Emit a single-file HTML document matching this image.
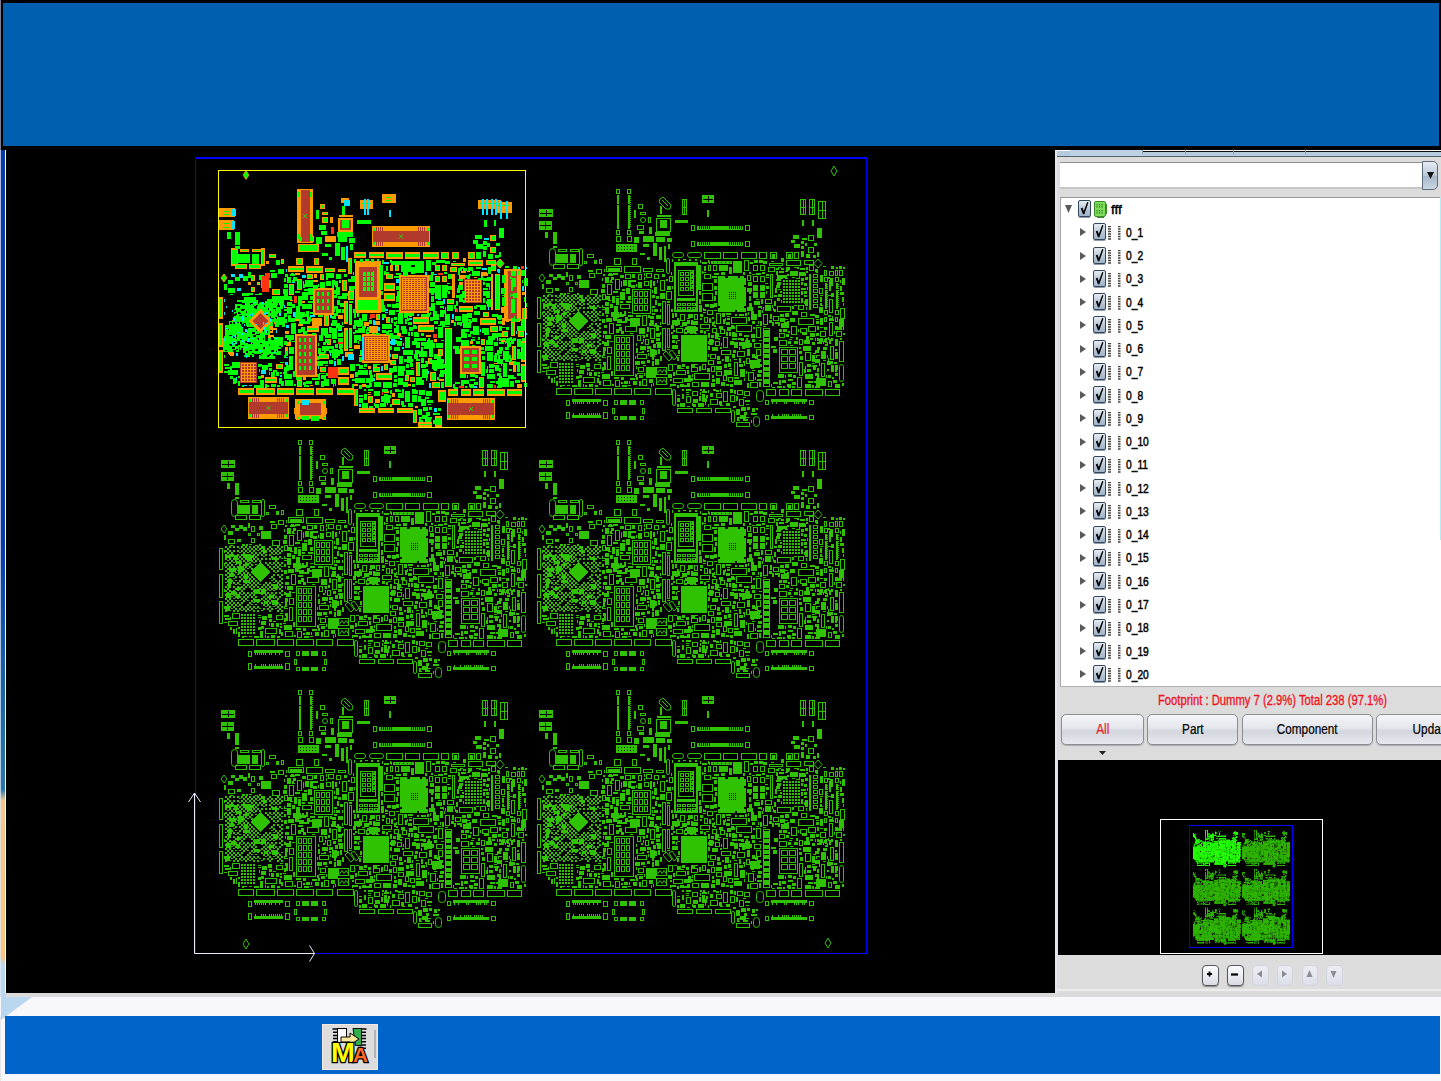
<!DOCTYPE html>
<html lang="en"><head><meta charset="utf-8"><title>PCB Footprint Viewer</title>
<style>
html,body{margin:0;padding:0}
body{width:1441px;height:1081px;overflow:hidden;position:relative;background:#f8f8fa;font-family:"Liberation Sans",sans-serif;font-size:13px;color:#000}
.a{position:absolute}
#banner{left:0;top:0;width:1441px;height:150px;background:#000}
#banner i{position:absolute;left:3px;top:3px;width:1436px;height:143px;background:#005fae}
#canvas{left:6px;top:146px;width:1050px;height:847px;background:#000}
#panel{left:1055px;top:150px;width:386px;height:843px;background:#dcdcdc}
.t{position:absolute;white-space:nowrap;transform-origin:0 50%;transform:scaleX(.76);font-size:13.5px;line-height:16px;height:16px;-webkit-text-stroke:.5px #000}
.cb{position:absolute;width:11px;height:15px;border:1px solid #33465e;border-radius:2px;background:linear-gradient(#e6edf4,#bccbda 50%,#9fb3c8);box-shadow:0 1px 0 #8e9cac}
.cb svg{position:absolute;left:0;top:0}
.btn{position:absolute;top:564px;height:31px;border:1px solid #8a8d93;border-radius:5px;background:linear-gradient(#f4f5f8,#e4e6ec 45%,#d3d6de 55%,#e6e8ee);box-shadow:0 1px 1px #aaa;box-sizing:border-box;text-align:center;overflow:hidden}
.btn span{display:inline-block;transform:scaleX(.84);line-height:29px;font-size:14px;-webkit-text-stroke:.2px currentColor}
.zb{position:absolute;top:814.500px;width:16.500px;height:21px;box-sizing:border-box;border-radius:4px;text-align:center}
</style></head><body>
<div id="banner" class="a"><i></i></div>
<div class="a" style="left:0;top:0;width:1px;height:150px;background:#7c8098"></div><div class="a" style="left:0;top:150px;width:6px;height:847px;background:linear-gradient(#0b36a6 0,#0b36a6 46%,#0d4aa8 52%,#1a6aa6 66%,#2a78a8 75.500%,#f3c88a 76.800%,#f6c67c 95.200%,#bcd8ee 96.200%,#b8d6ee 100%)"></div><div class="a" style="left:0;top:150px;width:1px;height:847px;background:rgba(225,232,250,.75)"></div><div class="a" style="left:5px;top:150px;width:1px;height:843px;background:#fff"></div>
<div id="canvas" class="a"><svg class="a" style="left:0;top:0" width="1050" height="847" shape-rendering="crispEdges"><defs><g id="bd"><path fill="currentColor" style="stroke:var(--bs,none);stroke-width:var(--bw,0)" d="M3 39h14v8h-14zM3 51h13v9h-13zM9 62h3v6h-3zM17 62h4v12h-4zM17 76h4v2h-4zM80 19h4v5h-4zM81 20v3h2v-3zM80 60h4v5h-4zM81 61v3h2v-3zM81 25h2v34h-2zM91 19h4v5h-4zM92 20v3h2v-3zM91 60h4v5h-4zM92 61v3h2v-3zM92 25h2v34h-2zM94 26h1v1h-1zM94 28h1v1h-1zM94 30h1v1h-1zM94 32h1v1h-1zM94 34h1v1h-1zM94 36h1v1h-1zM94 38h1v1h-1zM94 40h1v1h-1zM94 42h1v1h-1zM94 44h1v1h-1zM94 46h1v1h-1zM94 48h1v1h-1zM94 50h1v1h-1zM94 52h1v1h-1zM94 54h1v1h-1zM94 56h1v1h-1zM80 66h5v6h-5zM81 67v4h3v-4zM91 66h5v6h-5zM92 67v4h3v-4zM80 74h21v8h-21zM98 40h2v8h-2zM104 42h6v3h-6zM105 43v1h4v-1zM112 47h3v6h-3zM113 48v4h1v-4zM146 29h5v16h-5zM147 30v14h3v-14zM148 30h1v14h-1zM147 37h3v1h-3zM139 50h13v3h-13zM124 36h2v8h-2zM121 45h14v2h-14zM120 48h15v14h-15zM121 49v12h13v-12zM124 50h7v8h-7zM119 62h15v4h-15zM103 61h5v3h-5zM98 67h5v6h-5zM107 66h11v6h-11zM120 67h9v5h-9zM107 74h6v3h-6zM117 73h4v13h-4zM123 77h3v13h-3zM128 76h2v16h-2zM111 87h3v3h-3zM22 79h9v3h-9zM23 80v1h7v-1zM34 79h9v3h-9zM35 80v1h7v-1zM20 84h12v9h-12zM34 84h6v9h-6zM17 94h12v5h-12zM18 95v3h10v-3zM31 94h12v5h-12zM32 95v3h10v-3zM51 84h7v4h-7zM52 85v2h5v-2zM48 91h3v3h-3zM49 92v1h1v-1zM58 90h3v4h-3zM63 89h3v5h-3zM64 90v3h1v-3zM78 88h7v7h-7zM79 89v5h5v-5zM96 88h5v7h-5zM97 89v5h3v-5zM70 96h16v6h-16zM71 97v4h14v-4zM72 98h12v3h-12zM88 96h17v7h-17zM89 97v5h15v-5zM107 98h10v4h-10zM108 99v2h8v-2zM120 99h8v3h-8zM121 100v1h6v-1zM13 104h4v3h-4zM17 107h4v3h-4zM21 104h4v4h-4zM25 106h4v4h-4zM33 105h4v6h-4zM34 106v4h2v-4zM33 117h4v5h-4zM34 118v3h2v-3zM30 112h3v3h-3zM31 113v1h1v-1zM39 112h3v3h-3zM40 113v1h1v-1zM19 118h4v3h-4zM166 25h12v8h-12zM171 40h2v7h-2zM155 55h4v6h-4zM156 56v4h2v-4zM209 55h5v6h-5zM210 56v4h3v-4zM161 56h46v4h-46zM155 71h4v6h-4zM156 72v4h2v-4zM209 71h5v6h-5zM210 72v4h3v-4zM161 72h46v4h-46zM264 29h6v16h-6zM265 30v14h4v-14zM267 30h1v14h-1zM265 37h4v1h-4zM273 29h6v16h-6zM274 30v14h4v-14zM276 30h1v14h-1zM274 37h4v1h-4zM282 31h8v18h-8zM283 32v16h6v-16zM286 32h1v16h-1zM283 40h6v1h-6zM266 50h2v6h-2zM276 50h2v6h-2zM281 58h5v10h-5zM272 65h6v6h-6zM273 66v4h4v-4zM272 77h6v6h-6zM273 78v4h4v-4zM265 71h3v3h-3zM265 76h3v3h-3zM265 81h3v6h-3zM269 73h2v3h-2zM278 73h3v3h-3zM168 82h17v7h-17zM169 83v5h15v-5zM187 82h15v7h-15zM188 83v5h13v-5zM205 82h16v7h-16zM206 83v5h14v-5zM223 82h8v7h-8zM224 83v5h6v-5zM234 82h7v7h-7zM235 83v5h5v-5zM236 84h3v4h-3zM250 82h7v7h-7zM251 83v5h5v-5zM252 84h3v4h-3zM268 90h10v5h-10zM269 91v3h8v-3zM273 95h5v6h-5zM274 96v4h3v-4zM233 93h14v3h-14zM234 94v1h12v-1zM250 90h15v6h-15zM251 91v4h13v-4zM138 92h24v50h-24zM140 94v46h20v-46zM138 92h24v4h-24zM144 102h4v4h-4zM145 103v2h2v-2zM149 102h4v4h-4zM150 103v2h2v-2zM154 102h4v4h-4zM155 103v2h2v-2zM144 107h4v4h-4zM145 108v2h2v-2zM149 107h4v4h-4zM150 108v2h2v-2zM154 107h4v4h-4zM155 108v2h2v-2zM144 112h4v4h-4zM145 113v2h2v-2zM149 112h4v4h-4zM150 113v2h2v-2zM154 112h4v4h-4zM155 113v2h2v-2zM144 117h4v4h-4zM145 118v2h2v-2zM149 117h4v4h-4zM150 118v2h2v-2zM154 117h4v4h-4zM155 118v2h2v-2zM142 100h16v26h-16zM143 101v24h14v-24zM141 128h18v3h-18zM141 133h4v3h-4zM142 134v1h2v-1zM146 133h4v3h-4zM147 134v1h2v-1zM151 133h4v3h-4zM152 134v1h2v-1zM156 133h4v3h-4zM157 134v1h2v-1zM141 137h4v3h-4zM142 138v1h2v-1zM146 137h4v3h-4zM147 138v1h2v-1zM151 137h4v3h-4zM152 138v1h2v-1zM156 137h4v3h-4zM157 138v1h2v-1zM182 106h28v36h-28zM145 165h26v27h-26zM175 91h21v3h-21zM197 91h9v12h-9zM172 95h3v6h-3zM173 96v4h1v-4zM177 95h4v6h-4zM178 96v4h2v-4zM183 95h9v6h-9zM217 95h5v6h-5zM218 96v4h3v-4zM224 95h5v6h-5zM225 96v4h3v-4zM217 106h5v6h-5zM218 107v4h3v-4zM224 106h5v6h-5zM225 107v4h3v-4zM217 115h5v6h-5zM224 115h5v6h-5zM217 122h5v6h-5zM224 122h5v6h-5zM234 104h3v24h-3zM235 105v22h1v-22zM162 95h3v25h-3zM154 100h3v4h-3zM155 101v2h1v-2zM154 105h3v4h-3zM155 106v2h1v-2zM154 110h3v4h-3zM155 111v2h1v-2zM154 115h3v4h-3zM155 116v2h1v-2zM166 113h11v8h-11zM167 114v6h9v-6zM166 123h11v8h-11zM167 124v6h9v-6zM273 104h2v36h-2zM277 104h5v4h-5zM278 105v2h3v-2zM277 109h5v4h-5zM278 110v2h3v-2zM277 114h5v4h-5zM278 115v2h3v-2zM277 119h5v4h-5zM278 120v2h3v-2zM277 124h5v4h-5zM278 125v2h3v-2zM277 129h5v4h-5zM278 130v2h3v-2zM277 134h5v4h-5zM278 135v2h3v-2zM288 100h3v6h-3zM289 101v4h1v-4zM288 107h4v5h-4zM289 108v3h2v-3zM288 140h4v5h-4zM289 141v3h2v-3zM289 113h2v26h-2zM291 114h1v1h-1zM291 116h1v1h-1zM291 118h1v1h-1zM291 120h1v1h-1zM291 122h1v1h-1zM291 124h1v1h-1zM291 126h1v1h-1zM291 128h1v1h-1zM291 130h1v1h-1zM291 132h1v1h-1zM291 134h1v1h-1zM291 136h1v1h-1zM299 100h3v6h-3zM300 101v4h1v-4zM299 107h4v5h-4zM300 108v3h2v-3zM299 140h4v5h-4zM300 141v3h2v-3zM300 113h2v26h-2zM302 114h1v1h-1zM302 116h1v1h-1zM302 118h1v1h-1zM302 120h1v1h-1zM302 122h1v1h-1zM302 124h1v1h-1zM302 126h1v1h-1zM302 128h1v1h-1zM302 130h1v1h-1zM302 132h1v1h-1zM302 134h1v1h-1zM302 136h1v1h-1zM288 147h3v5h-3zM289 148v3h1v-3zM299 147h3v5h-3zM300 148v3h1v-3zM96 119h19v25h-19zM97 120v23h17v-23zM98 121h4v6h-4zM99 122v4h2v-4zM103 121h4v6h-4zM104 122v4h2v-4zM108 121h4v6h-4zM109 122v4h2v-4zM98 128h4v6h-4zM99 129v4h2v-4zM103 128h4v6h-4zM104 129v4h2v-4zM108 128h4v6h-4zM109 129v4h2v-4zM98 135h4v6h-4zM99 136v4h2v-4zM103 135h4v6h-4zM104 136v4h2v-4zM108 135h4v6h-4zM109 136v4h2v-4zM78 165h20v41h-20zM79 166v39h18v-39zM80 167h4v6h-4zM81 168v4h2v-4zM85 167h4v6h-4zM86 168v4h2v-4zM90 167h4v6h-4zM91 168v4h2v-4zM80 174h4v6h-4zM81 175v4h2v-4zM85 174h4v6h-4zM86 175v4h2v-4zM90 174h4v6h-4zM91 175v4h2v-4zM80 181h4v6h-4zM81 182v4h2v-4zM85 181h4v6h-4zM86 182v4h2v-4zM90 181h4v6h-4zM91 182v4h2v-4zM80 188h4v6h-4zM81 189v4h2v-4zM85 188h4v6h-4zM86 189v4h2v-4zM90 188h4v6h-4zM91 189v4h2v-4zM80 195h4v6h-4zM81 196v4h2v-4zM85 195h4v6h-4zM86 196v4h2v-4zM90 195h4v6h-4zM91 196v4h2v-4zM247 110h2v2h-2zM250 110h2v2h-2zM253 110h2v2h-2zM256 110h2v2h-2zM259 110h2v2h-2zM262 110h2v2h-2zM247 113h2v2h-2zM250 113h2v2h-2zM253 113h2v2h-2zM256 113h2v2h-2zM259 113h2v2h-2zM262 113h2v2h-2zM247 116h2v2h-2zM250 116h2v2h-2zM253 116h2v2h-2zM256 116h2v2h-2zM259 116h2v2h-2zM262 116h2v2h-2zM247 119h2v2h-2zM250 119h2v2h-2zM253 119h2v2h-2zM256 119h2v2h-2zM259 119h2v2h-2zM262 119h2v2h-2zM247 122h2v2h-2zM250 122h2v2h-2zM253 122h2v2h-2zM256 122h2v2h-2zM259 122h2v2h-2zM262 122h2v2h-2zM247 125h2v2h-2zM250 125h2v2h-2zM253 125h2v2h-2zM256 125h2v2h-2zM259 125h2v2h-2zM262 125h2v2h-2zM247 128h2v2h-2zM250 128h2v2h-2zM253 128h2v2h-2zM256 128h2v2h-2zM259 128h2v2h-2zM262 128h2v2h-2zM247 131h2v2h-2zM250 131h2v2h-2zM253 131h2v2h-2zM256 131h2v2h-2zM259 131h2v2h-2zM262 131h2v2h-2zM23 193h2v2h-2zM26 193h2v2h-2zM29 193h2v2h-2zM32 193h2v2h-2zM35 193h2v2h-2zM23 196h2v2h-2zM26 196h2v2h-2zM29 196h2v2h-2zM32 196h2v2h-2zM35 196h2v2h-2zM23 199h2v2h-2zM26 199h2v2h-2zM29 199h2v2h-2zM32 199h2v2h-2zM35 199h2v2h-2zM23 202h2v2h-2zM26 202h2v2h-2zM29 202h2v2h-2zM32 202h2v2h-2zM35 202h2v2h-2zM23 205h2v2h-2zM26 205h2v2h-2zM29 205h2v2h-2zM32 205h2v2h-2zM35 205h2v2h-2zM23 208h2v2h-2zM26 208h2v2h-2zM29 208h2v2h-2zM32 208h2v2h-2zM35 208h2v2h-2zM23 211h2v2h-2zM26 211h2v2h-2zM29 211h2v2h-2zM32 211h2v2h-2zM35 211h2v2h-2zM243 177h19v26h-19zM244 178v24h17v-24zM245 179h7v6h-7zM246 180v4h5v-4zM253 179h7v6h-7zM254 180v4h5v-4zM245 186h7v6h-7zM246 187v4h5v-4zM253 186h7v6h-7zM254 187v4h5v-4zM245 193h7v6h-7zM246 194v4h5v-4zM253 193h7v6h-7zM254 194v4h5v-4zM1 127h4v22h-4zM2 128v20h2v-20zM1 153h4v24h-4zM2 154v22h2v-22zM1 180h4v23h-4zM2 181v21h2v-21zM126 131h4v23h-4zM127 132v21h2v-21zM131 134h3v21h-3zM132 135v19h1v-19zM126 158h4v23h-4zM127 159v21h2v-21zM131 158h3v20h-3zM132 159v18h1v-18zM120 197h11v8h-11zM121 198v6h9v-6zM120 207h11v8h-11zM121 208v6h9v-6zM110 197h10v11h-10zM20 218h16v7h-16zM21 219v5h14v-5zM38 218h19v7h-19zM39 219v5h17v-5zM59 218h17v7h-17zM60 219v5h15v-5zM78 218h18v7h-18zM79 219v5h16v-5zM98 218h17v7h-17zM99 219v5h15v-5zM119 218h17v7h-17zM120 219v5h15v-5zM30 230h4v6h-4zM31 231v4h2v-4zM67 230h5v6h-5zM68 231v4h3v-4zM36 229h29v3h-29zM37 232h1v2h-1zM39 232h1v2h-1zM41 232h1v2h-1zM43 232h1v2h-1zM45 232h1v2h-1zM47 232h1v2h-1zM51 232h1v2h-1zM53 232h1v2h-1zM57 232h1v2h-1zM61 232h1v2h-1zM30 242h4v7h-4zM31 243v5h2v-5zM67 242h5v7h-5zM68 243v5h3v-5zM36 245h29v3h-29zM37 243h1v2h-1zM43 243h1v2h-1zM45 243h1v2h-1zM47 243h1v2h-1zM51 243h1v2h-1zM53 243h1v2h-1zM55 243h1v2h-1zM57 243h1v2h-1zM59 243h1v2h-1zM61 243h1v2h-1zM63 243h1v2h-1zM78 230h4v5h-4zM79 231v3h2v-3zM84 230h7v5h-7zM93 230h7v5h-7zM104 230h4v5h-4zM105 231v3h2v-3zM76 238h3v6h-3zM77 239v4h1v-4zM106 238h3v6h-3zM107 239v4h1v-4zM78 246h4v4h-4zM79 247v2h2v-2zM84 246h7v4h-7zM93 246h7v4h-7zM104 246h4v4h-4zM105 247v2h2v-2zM141 238h16v5h-16zM142 239v3h14v-3zM160 238h16v5h-16zM161 239v3h14v-3zM179 238h16v5h-16zM180 239v3h14v-3zM200 252h14v5h-14zM201 253v3h12v-3zM230 219h10v7h-10zM231 220v5h8v-5zM243 219h10v7h-10zM244 220v5h8v-5zM255 219h11v7h-11zM256 220v5h9v-5zM269 219h18v7h-18zM270 220v5h16v-5zM289 219h15v7h-15zM290 220v5h13v-5zM229 230h4v5h-4zM230 231v3h2v-3zM273 230h5v5h-5zM274 231v3h3v-3zM235 229h36v3h-36zM236 232h1v2h-1zM240 232h1v2h-1zM248 232h1v2h-1zM250 232h1v2h-1zM258 232h1v2h-1zM260 232h1v2h-1zM262 232h1v2h-1zM266 232h1v2h-1zM268 232h1v2h-1zM229 245h4v5h-4zM230 246v3h2v-3zM273 245h5v5h-5zM274 246v3h3v-3zM235 246h36v3h-36zM236 244h1v2h-1zM242 244h1v2h-1zM246 244h1v2h-1zM248 244h1v2h-1zM250 244h1v2h-1zM252 244h1v2h-1zM256 244h1v2h-1zM258 244h1v2h-1zM260 244h1v2h-1zM262 244h1v2h-1zM264 244h1v2h-1zM303 171h5v21h-5zM304 172v19h3v-19zM284 161h6v6h-6zM285 162v4h4v-4zM300 161h6v6h-6zM301 162v4h4v-4zM227 158h7v59h-7zM228 159v57h5v-57zM228 160h5v7h-5zM228 168h5v4h-5zM228 174h5v4h-5zM228 179h5v4h-5zM228 184h5v4h-5zM228 190h5v5h-5zM228 197h5v4h-5zM228 202h5v5h-5zM228 209h5v5h-5zM114 179h5v8h-5zM263 192h4v14h-4zM264 193v12h2v-12zM263 169h4v6h-4zM264 170v4h2v-4zM285 193h4v14h-4zM286 194v12h2v-12zM280 208h10v8h-10zM83 157h3v4h-3zM196 184h3v4h-3zM243 101h5v2h-5zM241 136h14v6h-14zM242 137v4h12v-4zM77 142h6v6h-6zM140 200h10v5h-10zM141 201v3h8v-3zM272 156h8v6h-8zM273 157v4h6v-4zM272 211h5v2h-5zM195 147h16v7h-16zM196 148v5h14v-5zM114 158h5v11h-5zM115 159v9h3v-9zM114 150h4v6h-4zM117 111h2v5h-2zM204 199h5v8h-5zM232 97h7v5h-7zM233 98v3h5v-3zM84 144h4v3h-4zM285 181h5v8h-5zM172 163h2v5h-2zM279 180h4v3h-4zM252 171h3v3h-3zM150 226h5v7h-5zM151 227v5h3v-5zM108 111h5v5h-5zM109 112v3h3v-3zM200 155h16v7h-16zM201 156v5h14v-5zM175 165h3v3h-3zM179 171h5v5h-5zM180 172v3h3v-3zM80 159h3v4h-3zM181 186h3v4h-3zM146 194h3v3h-3zM50 193h4v4h-4zM47 207h12v6h-12zM48 208v4h10v-4zM71 186h4v14h-4zM72 187v12h2v-12zM146 224h2v5h-2zM103 158h6v6h-6zM208 90h5v11h-5zM209 91v9h3v-9zM291 191h4v4h-4zM137 208h10v5h-10zM138 209v3h8v-3zM130 121h6v9h-6zM131 122v7h4v-7zM106 209h5v7h-5zM107 210v5h3v-5zM119 189h4v6h-4zM303 100h4v6h-4zM304 101v4h2v-4zM239 118h2v5h-2zM216 169h3v3h-3zM262 148h16v7h-16zM263 149v5h14v-5zM158 203h16v7h-16zM159 204v5h14v-5zM214 190h10v8h-10zM174 223h3v4h-3zM218 173h7v5h-7zM219 174v3h5v-3zM294 176h4v14h-4zM295 177v12h2v-12zM180 201h6v5h-6zM181 202v3h4v-3zM166 194h4v6h-4zM167 195v4h2v-4zM276 172h3v3h-3zM174 184h6v5h-6zM175 185v3h4v-3zM94 148h10v8h-10zM187 221h5v11h-5zM188 222v9h3v-9zM79 109h5v11h-5zM80 110v9h3v-9zM69 132h4v4h-4zM87 110h4v6h-4zM180 196h6v4h-6zM101 184h10v5h-10zM102 185v3h8v-3zM185 212h4v4h-4zM209 170h5v8h-5zM188 194h3v4h-3zM136 165h6v4h-6zM219 186h3v3h-3zM211 237h3v3h-3zM156 221h6v5h-6zM157 222v3h4v-3zM261 207h5v11h-5zM262 208v9h3v-9zM58 194h7v5h-7zM59 195v3h5v-3zM257 65h6v4h-6zM183 156h4v3h-4zM180 143h5v11h-5zM181 144v9h3v-9zM10 200h10v5h-10zM11 201v3h8v-3zM10 118h7v5h-7zM11 119v3h5v-3zM171 140h6v5h-6zM172 141v3h4v-3zM187 167h5v11h-5zM188 168v9h3v-9zM14 192h8v6h-8zM15 193v4h6v-4zM140 158h7v5h-7zM141 159v3h5v-3zM172 190h6v5h-6zM173 191v3h4v-3zM81 149h5v4h-5zM79 210h5v7h-5zM80 211v5h3v-5zM198 210h8v5h-8zM151 156h9v7h-9zM256 212h4v3h-4zM70 148h6v4h-6zM144 233h5v4h-5zM238 131h2v5h-2zM243 170h8v6h-8zM244 171v4h6v-4zM168 147h4v6h-4zM169 148v4h2v-4zM69 107h4v6h-4zM246 210h4v3h-4zM212 202h6v9h-6zM213 203v7h4v-7zM215 141h3v3h-3zM84 134h10v5h-10zM85 135v3h8v-3zM270 166h3v4h-3zM68 155h3v3h-3zM227 144h5v11h-5zM228 145v9h3v-9zM155 194h4v3h-4zM218 131h6v4h-6zM43 200h5v4h-5zM166 228h5v4h-5zM211 179h3v7h-3zM88 211h4v3h-4zM158 144h4v6h-4zM159 145v4h2v-4zM255 156h6v9h-6zM256 157v7h4v-7zM120 126h3v3h-3zM104 176h6v4h-6zM176 106h5v2h-5zM190 152h4v3h-4zM58 202h3v4h-3zM141 228h3v4h-3zM268 170h6v4h-6zM306 127h2v5h-2zM101 165h4v6h-4zM102 166v4h2v-4zM155 150h2v5h-2zM69 165h6v4h-6zM288 169h3v3h-3zM237 146h6v5h-6zM238 147v3h4v-3zM173 169h4v6h-4zM293 101h5v5h-5zM294 102v3h3v-3zM254 101h8v5h-8zM229 135h6v6h-6zM293 152h4v14h-4zM294 153v12h2v-12zM179 163h4v3h-4zM211 137h6v4h-6zM256 141h6v4h-6zM120 145h5v4h-5zM84 122h5v8h-5zM176 158h5v5h-5zM177 159v3h3v-3zM70 126h4v4h-4zM242 124h4v3h-4zM295 195h3v7h-3zM136 150h8v5h-8zM124 186h2v5h-2zM189 186h4v6h-4zM113 57h3v7h-3zM203 188h2v5h-2zM122 133h3v3h-3zM84 105h4v3h-4zM89 156h12v6h-12zM90 157v4h10v-4zM269 204h8v5h-8zM166 224h3v4h-3zM144 144h5v7h-5zM145 145v5h3v-5zM274 163h5v4h-5zM237 212h5v2h-5zM67 210h8v6h-8zM68 211v4h6v-4zM44 195h5v4h-5zM43 110h10v8h-10zM144 214h4v3h-4zM269 182h6v9h-6zM270 183v7h4v-7zM131 116h4v4h-4zM180 208h4v6h-4zM52 100h5v2h-5zM222 140h3v7h-3zM203 229h5v7h-5zM204 230v5h3v-5zM268 113h3v3h-3zM69 138h4v6h-4zM197 180h3v3h-3zM109 169h4v6h-4zM110 170v4h2v-4zM36 215h5v2h-5zM157 234h3v3h-3zM279 145h4v3h-4zM269 214h6v4h-6zM118 155h5v2h-5zM204 245h6v4h-6zM222 200h4v3h-4zM176 177h6v4h-6zM196 168h5v2h-5zM242 204h6v4h-6zM250 164h3v3h-3zM102 34h5v5h-5zM103 35v3h3v-3zM106 145h5v11h-5zM107 146v9h3v-9zM119 130h2v5h-2zM90 118h4v6h-4zM267 176h8v5h-8zM132 204h4v4h-4zM66 204h8v5h-8zM303 149h5v8h-5zM76 126h3v7h-3zM174 229h8v6h-8zM175 230v4h6v-4zM241 112h4v3h-4zM274 144h5v2h-5zM124 110h5v11h-5zM125 111v9h3v-9zM192 193h3v4h-3zM73 153h5v11h-5zM74 154v9h3v-9zM201 220h6v5h-6zM202 221v3h4v-3zM220 157h5v11h-5zM221 158v9h3v-9zM105 191h4v3h-4zM192 207h5v5h-5zM193 208v3h3v-3zM211 213h2v5h-2zM7 197h5v2h-5zM88 141h2v5h-2zM284 127h2v5h-2zM299 196h3v4h-3zM102 112h4v6h-4zM102 197h6v5h-6zM103 198v3h4v-3zM156 212h7v5h-7zM157 213v3h5v-3zM85 207h3v3h-3zM180 223h6v5h-6zM181 224v3h4v-3zM241 105h6v4h-6zM71 114h5v11h-5zM72 115v9h3v-9zM92 110h3v7h-3zM250 97h4v3h-4zM164 154h10v5h-10zM165 155v3h8v-3zM110 103h6v5h-6zM111 104v3h4v-3zM97 211h4v4h-4zM124 123h5v2h-5zM210 188h4v6h-4zM211 189v4h2v-4zM103 205h4v3h-4zM155 197h7v5h-7zM156 198v3h5v-3zM6 114h2v5h-2zM203 163h3v3h-3zM238 167h4v4h-4zM164 144h3v3h-3zM254 148h5v4h-5zM6 194h5v2h-5zM281 177h3v3h-3zM174 134h4v4h-4zM66 149h3v4h-3zM184 159h5v5h-5zM185 160v3h3v-3zM203 194h4v3h-4zM126 104h3v3h-3zM190 233h4v3h-4zM269 129h3v7h-3zM265 142h6v5h-6zM266 143v3h4v-3zM245 153h8v5h-8zM292 211h4v6h-4zM293 212v4h2v-4zM299 214h5v4h-5zM208 165h5v2h-5zM203 172h6v4h-6zM243 210h2v5h-2zM151 213h3v4h-3zM111 190h3v3h-3zM293 110h4v6h-4zM185 180h10v5h-10zM186 181v3h8v-3zM163 135h3v7h-3zM181 191h4v3h-4zM54 119h8v6h-8zM55 120v4h6v-4zM135 155h3v4h-3zM42 210h3v7h-3zM216 151h3v3h-3zM220 179h5v7h-5zM221 180v5h3v-5zM194 171h4v4h-4zM252 209h5v2h-5zM271 199h4v3h-4zM293 169h2v5h-2zM188 200h8v5h-8zM152 144h5v4h-5zM68 172h5v4h-5zM265 108h3v3h-3zM293 129h4v14h-4zM294 130v12h2v-12zM211 118h5v4h-5zM194 225h5v7h-5zM195 226v5h3v-5zM99 191h5v4h-5zM146 152h5v4h-5zM263 102h6v4h-6zM264 186h3v4h-3zM304 122h4v3h-4zM77 103h5v2h-5zM150 196h3v3h-3zM89 104h6v5h-6zM90 105v3h4v-3zM218 90h4v3h-4zM66 124h4v6h-4zM67 125v4h2v-4zM53 103h6v5h-6zM54 104v3h4v-3zM258 74h6v4h-6zM237 179h4v4h-4zM266 163h5v2h-5zM243 163h6v5h-6zM244 164v3h4v-3zM299 156h3v4h-3zM265 118h5v2h-5zM132 194h5v7h-5zM133 195v5h3v-5zM276 195h5v2h-5zM293 116h2v5h-2zM299 169h3v7h-3zM244 144h4v3h-4zM95 110h5v2h-5zM165 212h8v5h-8zM198 192h4v14h-4zM199 193v12h2v-12zM10 110h5v4h-5zM279 189h5v4h-5zM235 176h5v2h-5zM169 134h4v3h-4zM120 172h5v2h-5zM117 174h3v4h-3zM168 104h7v5h-7zM169 105v3h5v-3zM270 84h4v4h-4zM229 129h7v5h-7zM230 130v3h5v-3zM214 212h8v6h-8zM215 213v4h6v-4zM213 133h3v4h-3zM133 106h4v6h-4zM134 107v4h2v-4zM178 126h2v5h-2zM303 96h3v3h-3zM168 96h2v5h-2zM118 117h3v7h-3zM211 105h4v6h-4zM212 106v4h2v-4zM304 138h5v11h-5zM305 139v9h3v-9zM269 107h3v3h-3zM224 151h2v5h-2zM68 195h2v5h-2zM75 142h2v5h-2zM213 126h2v5h-2zM136 175h6v4h-6zM104 83h5v2h-5zM299 182h3v7h-3zM230 116h3v3h-3zM200 239h4v6h-4zM89 147h3v4h-3zM268 121h3v3h-3zM208 221h6v5h-6zM209 222v3h4v-3zM284 148h3v7h-3zM157 229h5v4h-5zM65 119h4v4h-4zM71 177h5v7h-5zM72 178v5h3v-5zM152 205h3v7h-3zM178 116h3v4h-3zM30 102h2v5h-2zM163 129h2v5h-2zM201 181h8v6h-8zM202 182v4h6v-4zM118 104h5v5h-5zM119 105v3h3v-3zM67 181h2v5h-2zM173 148h2v5h-2zM41 105h4v4h-4zM196 163h5v4h-5zM61 208h2v5h-2zM78 136h4v6h-4zM120 168h4v3h-4zM141 195h4v4h-4zM208 242h3v3h-3zM221 204h4v3h-4zM72 104h5v2h-5zM295 96h3v3h-3zM215 144h6v6h-6zM292 205h3v3h-3zM102 104h4v6h-4zM103 105v4h2v-4zM113 209h4v4h-4zM227 91h4v3h-4zM53 214h4v3h-4zM262 135h6v5h-6zM263 136v3h4v-3zM288 157h3v3h-3zM279 203h4v3h-4zM162 233h6v4h-6zM122 179h2v5h-2zM221 209h5v2h-5zM101 55h7v5h-7zM102 56v3h5v-3zM212 112h4v4h-4zM77 121h5v2h-5zM258 82h5v7h-5zM259 83v5h3v-5zM205 237h5v4h-5zM118 139h4v3h-4zM80 154h5v2h-5zM66 114h3v4h-3zM115 170h3v3h-3zM171 198h3v4h-3zM264 98h5v2h-5zM166 92h5v2h-5zM247 159h4v3h-4zM216 238h3v4h-3zM120 157h3v3h-3zM277 85h3v3h-3zM198 172h4v6h-4zM304 116h2v5h-2zM194 214h3v3h-3zM103 211h2v5h-2zM20 211h2v5h-2zM283 118h4v6h-4zM284 119v4h2v-4zM252 204h4v3h-4zM40 206h3v3h-3zM111 176h4v3h-4zM209 230h5v2h-5zM51 198h3v3h-3zM265 128h2v5h-2zM200 226h2v5h-2zM258 171h4v3h-4zM195 156h4v3h-4zM283 169h4v3h-4zM233 150h3v3h-3zM249 143h4v4h-4zM116 125h3v3h-3zM206 176h3v3h-3zM183 231h3v4h-3zM306 108h3v7h-3zM280 163h3v3h-3zM111 157h2v5h-2zM287 177h4v3h-4zM95 115h4v3h-4zM187 149h2v5h-2zM194 219h3v4h-3zM191 157h4v4h-4zM203 144h5v2h-5zM293 149h5v2h-5zM151 150h3v4h-3zM136 170h3v3h-3zM255 70h4v3h-4zM234 144h2v5h-2zM271 194h4v3h-4zM163 226h2v5h-2zM257 205h3v3h-3zM240 115h4v3h-4zM60 99h6v5h-6zM61 100v3h4v-3zM77 148h4v3h-4zM297 210h4v3h-4zM148 208h4v4h-4zM186 143h3v4h-3zM264 158h7v5h-7zM265 159v3h5v-3zM92 126h3v4h-3zM281 82h2v5h-2zM175 213h4v4h-4zM157 151h5v4h-5zM216 184h3v4h-3zM223 212h2v5h-2zM53 202h3v4h-3zM163 196h2v5h-2zM245 88h3v4h-3zM215 164h4v4h-4zM280 151h3v3h-3zM241 216h5v2h-5zM252 214h3v4h-3zM207 249h5v2h-5zM241 128h3v3h-3zM178 103h5v2h-5zM74 134h3v4h-3zM135 214h5v2h-5zM124 125h5v4h-5zM80 128h3v7h-3zM114 146h4v3h-4zM187 205h4v6h-4zM188 206v4h2v-4zM277 197h3v3h-3zM136 143h2v5h-2zM94 208h5v2h-5zM75 201h2v5h-2zM96 104h3v4h-3zM131 68h5v4h-5zM198 207h5v2h-5zM283 137h4v6h-4zM299 203h3v3h-3zM276 185h3v7h-3zM175 196h4v6h-4zM176 197v4h2v-4zM85 161h3v3h-3zM15 208h2v5h-2zM240 109h5v2h-5zM179 166h3v3h-3zM178 109h3v4h-3zM100 145h5v2h-5zM120 163h4v4h-4zM67 192h3v3h-3zM279 216h5v2h-5zM281 172h5v2h-5zM295 123h3v4h-3zM86 151h5v2h-5zM90 131h5v2h-5zM116 191h2v5h-2zM164 160h3v3h-3zM166 221h5v2h-5zM132 74h2v5h-2zM67 177h3v4h-3zM92 145h5v2h-5zM220 103h5v2h-5zM75 107h3v3h-3zM178 133h3v4h-3zM266 68h5v2h-5zM193 97h3v7h-3zM150 219h5v2h-5zM119 180h2v5h-2zM223 90h4v3h-4zM247 105h4v3h-4zM263 181h3v3h-3zM244 148h5v4h-5zM205 168h3v3h-3zM86 215h5v2h-5zM67 161h4v3h-4zM176 209h3v3h-3zM225 129h2v5h-2zM302 157h4v3h-4zM114 110h2v5h-2zM284 105h3v7h-3zM100 178h2v5h-2zM190 143h5v2h-5zM43 205h3v3h-3zM78 207h5v2h-5zM172 176h2v4h-2zM307 133h1v3h-1zM287 171h1v3h-1zM84 131h3v2h-3zM296 146h1v3h-1zM270 101h2v2h-2zM137 160h2v2h-2zM281 198h2v4h-2zM141 185h3v1h-3zM214 173h2v4h-2zM265 121h2v4h-2zM151 236h3v1h-3zM210 247h3v1h-3zM182 168h2v2h-2zM124 139h1v3h-1zM107 166h2v2h-2zM256 216h3v2h-3zM136 89h1v3h-1zM148 215h3v2h-3zM186 189h2v2h-2zM70 137h3v1h-3zM263 106h1v3h-1zM193 162h2v4h-2zM256 136h2v3h-2zM31 123h3v1h-3zM18 210h1v3h-1zM178 155h2v2h-2zM249 205h1v3h-1zM148 162h3v2h-3zM76 214h2v2h-2zM67 137h3v1h-3zM269 103h1v3h-1zM180 220h3v2h-3zM106 181h2v2h-2zM227 156h3v1h-3zM281 206h2v2h-2zM201 250h3v1h-3zM167 102h3v1h-3zM178 140h3v1h-3zM242 152h2v4h-2zM213 102h2v2h-2zM244 121h2v2h-2zM62 205h2v2h-2zM197 236h3v2h-3zM172 220h1v3h-1zM307 163h2v2h-2zM222 151h1v3h-1zM284 135h3v1h-3zM249 108h3v1h-3zM281 185h3v1h-3zM279 168h1v3h-1zM287 96h3v1h-3zM280 149h3v1h-3zM225 136h1v3h-1zM274 168h3v2h-3zM278 211h2v2h-2zM184 177h2v2h-2zM306 213h2v3h-2zM135 162h2v2h-2zM123 174h2v4h-2zM107 195h3v1h-3zM84 142h2v2h-2zM6 142h1v3h-1zM124 162h1v3h-1zM187 102h2v3h-2zM307 97h2v2h-2zM134 214h1v3h-1zM159 89h2v2h-2zM26 215h3v1h-3zM235 91h3v1h-3zM261 97h2v2h-2zM100 114h1v3h-1zM18 207h1v3h-1zM238 139h2v3h-2zM139 143h2v4h-2zM251 214h1v3h-1zM224 194h2v3h-2zM107 169h1v3h-1zM179 121h2v4h-2zM294 108h3v2h-3zM111 180h2v2h-2zM249 149h3v1h-3zM193 198h3v1h-3zM237 138h1v3h-1zM198 189h3v1h-3zM103 182h3v1h-3zM280 185h1v3h-1zM164 219h2v2h-2zM184 235h3v1h-3zM131 179h3v1h-3zM230 121h1v3h-1zM292 167h1v3h-1zM268 199h2v4h-2zM262 159h1v3h-1zM289 168h3v1h-3zM251 104h2v2h-2zM299 195h3v1h-3zM24 123h3v2h-3zM74 171h3v1h-3zM63 211h2v4h-2zM47 214h1v3h-1zM130 109h2v2h-2zM292 188h1v3h-1zM230 104h3v2h-3zM291 173h1v3h-1zM145 198h3v1h-3zM281 156h2v4h-2zM210 201h1v3h-1zM28 123h2v2h-2zM249 101h3v1h-3zM251 151h2v2h-2zM208 208h1v3h-1zM119 153h2v2h-2zM71 170h2v2h-2zM207 227h3v1h-3zM110 164h2v3h-2zM151 148h3v1h-3zM124 152h1v3h-1zM236 217h3v1h-3zM116 136h3v2h-3zM223 170h3v1h-3zM258 97h3v1h-3zM216 200h3v1h-3zM141 215h2v3h-2zM92 149h2v2h-2zM100 173h1v3h-1zM85 114h1v3h-1zM149 157h2v3h-2zM185 102h2v3h-2zM154 163h3v1h-3zM298 192h3v2h-3zM134 209h2v2h-2zM220 129h3v1h-3zM224 189h1v3h-1zM201 248h2v2h-2zM137 202h2v4h-2zM141 170h3v1h-3zM245 98h3v2h-3zM240 101h2v4h-2zM236 152h2v4h-2zM220 155h3v1h-3zM40 194h3v1h-3zM164 148h2v2h-2zM108 203h1v3h-1zM168 161h2v3h-2zM140 171h1v3h-1zM12 196h1v3h-1zM292 125h3v1h-3zM299 200h2v2h-2zM74 112h3v1h-3zM67 104h2v2h-2zM72 130h3v1h-3zM254 175h3v1h-3zM243 160h3v2h-3zM209 143h2v3h-2zM268 125h3v2h-3zM252 161h2v2h-2zM142 180h2v4h-2zM51 202h1v3h-1zM291 199h2v2h-2zM74 110h2v2h-2zM293 148h3v1h-3zM208 193h1v3h-1zM299 179h2v2h-2zM184 219h1v3h-1zM141 187h2v4h-2zM221 189h3v1h-3zM191 148h3v2h-3zM230 107h3v1h-3zM254 167h3v1h-3zM168 139h2v2h-2zM215 250h1v3h-1zM190 214h3v2h-3zM160 157h2v4h-2zM217 157h2v2h-2zM215 198h3v1h-3zM20 206h2v2h-2zM116 143h3v2h-3zM31 215h3v1h-3zM218 243h3v2h-3zM172 184h1v3h-1zM105 172h2v2h-2zM219 207h1v3h-1zM216 104h3v1h-3zM247 216h2v2h-2zM100 207h2v3h-2zM67 187h3v1h-3zM173 91h1v3h-1zM117 213h1v3h-1zM196 162h3v1h-3zM295 191h2v3h-2zM164 222h1v3h-1zM59 215h3v2h-3zM112 145h2v3h-2zM210 168h2v2h-2zM238 125h3v2h-3zM189 148h1v3h-1zM155 208h2v3h-2zM195 155h3v1h-3zM226 140h1v3h-1zM300 97h2v2h-2zM86 119h3v2h-3zM281 168h2v3h-2zM24 215h2v2h-2zM92 215h3v1h-3zM6 185h1v3h-1zM178 151h1v3h-1zM239 152h3v2h-3zM260 108h3v1h-3zM66 143h2v3h-2zM94 163h3v1h-3zM66 135h1v3h-1zM176 152h2v4h-2zM121 174h2v4h-2zM135 102h1v3h-1zM12 124h3v1h-3zM62 202h2v2h-2zM138 194h3v1h-3zM6 201h3v1h-3zM243 159h3v1h-3zM150 222h3v1h-3zM116 187h2v3h-2zM120 160h3v1h-3zM290 205h1v3h-1zM298 161h1v3h-1zM229 113h3v1h-3zM139 155h3v1h-3zM236 135h1v3h-1zM280 99h2v4h-2zM271 117h1v3h-1zM66 139h3v1h-3zM163 121h2v4h-2zM66 185h1v3h-1zM49 215h2v2h-2zM226 102h3v2h-3zM41 123h2v2h-2zM156 233h1v3h-1zM6 168h1v3h-1zM70 145h2v2h-2zM123 156h3v1h-3zM92 142h3v1h-3zM212 147h2v4h-2zM151 200h2v4h-2zM199 144h2v2h-2zM153 89h2v2h-2zM114 115h2v3h-2zM172 90h1v3h-1zM263 177h2v2h-2zM284 125h3v1h-3zM106 165h3v1h-3zM270 137h1v3h-1zM258 135h3v1h-3zM295 168h2v3h-2zM65 202h3v1h-3zM304 110h1v3h-1zM240 98h3v2h-3zM12 206h2v3h-2zM172 234h1v3h-1zM210 234h3v1h-3zM215 243h3v2h-3zM220 238h2v2h-2zM203 177h1v3h-1zM112 183h1v3h-1zM284 168h3v1h-3zM68 99h1v3h-1zM115 214h1v3h-1zM55 200h3v1h-3zM85 212h2v2h-2zM194 189h1v3h-1zM292 107h2v2h-2zM66 171h2v3h-2zM269 196h1v3h-1zM104 203h3v1h-3zM83 144h1v3h-1zM166 101h1v3h-1zM135 139h2v3h-2zM156 204h1v3h-1zM283 193h1v3h-1zM260 167h2v3h-2zM40 196h3v1h-3zM101 203h3v1h-3zM37 124h3v1h-3zM212 142h1v3h-1zM142 89h2v2h-2zM182 166h3v1h-3zM100 196h1v3h-1zM170 160h3v1h-3zM207 102h2v3h-2zM167 142h3v1h-3zM141 225h3v1h-3zM256 107h3v1h-3zM131 131h3v2h-3zM265 112h2v3h-2zM99 186h1v3h-1zM116 120h1v3h-1zM150 224h3v1h-3zM108 107h1v3h-1zM248 152h3v1h-3zM169 232h1v3h-1zM279 99h1v3h-1zM253 169h3v1h-3zM176 147h2v2h-2zM144 156h3v1h-3zM250 100h3v1h-3zM136 116h1v3h-1zM167 219h2v2h-2zM66 197h2v4h-2zM159 194h3v1h-3zM222 136h3v2h-3zM185 173h1v3h-1zM307 157h1v3h-1zM190 162h2v4h-2zM146 219h2v2h-2zM287 190h3v1h-3zM170 225h2v3h-2zM207 191h2v2h-2zM113 153h1v3h-1zM158 163h3v1h-3zM245 130h1v3h-1zM99 204h2v3h-2zM41 199h1v3h-1zM214 92h3v2h-3zM62 192h3v1h-3zM284 157h3v1h-3zM198 220h2v4h-2zM227 137h1v3h-1zM6 129h1v3h-1zM270 97h2v3h-2zM172 171h1v3h-1zM289 174h2v2h-2zM148 159h1v3h-1zM191 146h3v1h-3zM121 110h1v3h-1zM202 168h3v2h-3zM141 234h2v3h-2zM276 215h2v3h-2zM235 214h1v3h-1zM176 205h2v3h-2zM242 97h3v1h-3zM141 148h2v2h-2zM177 219h3v2h-3zM289 172h3v1h-3zM292 145h3v2h-3zM93 211h1v3h-1zM80 126h3v1h-3zM108 103h1v3h-1zM291 185h1v3h-1zM147 89h3v1h-3zM177 170h1v3h-1zM284 133h2v2h-2zM296 207h2v2h-2zM67 165h1v3h-1zM304 168h2v2h-2zM116 139h1v3h-1zM167 138h1v3h-1zM277 183h3v1h-3zM242 119h3v1h-3zM213 122h2v2h-2zM268 131h1v3h-1zM276 193h3v1h-3zM73 103h3v1h-3zM201 247h3v1h-3zM164 90h1v3h-1zM66 108h1v3h-1zM85 111h1v3h-1zM7 125h2v2h-2zM11 125h2v2h-2zM15 125h2v2h-2zM19 125h2v2h-2zM23 125h2v2h-2zM27 125h2v2h-2zM31 125h2v2h-2zM35 125h2v2h-2zM39 125h2v2h-2zM43 125h2v2h-2zM51 125h2v2h-2zM59 125h2v2h-2zM63 125h2v2h-2zM9 127h2v2h-2zM21 127h2v1h-2zM25 127h2v2h-2zM29 127h2v2h-2zM33 127h2v2h-2zM37 127h2v2h-2zM41 127h2v2h-2zM45 127h2v2h-2zM49 127h2v2h-2zM53 127h2v2h-2zM57 127h2v2h-2zM61 127h2v2h-2zM7 129h2v2h-2zM11 129h2v2h-2zM15 129h2v2h-2zM19 129h2v2h-2zM23 129h2v2h-2zM27 129h2v2h-2zM31 129h2v2h-2zM35 129h2v2h-2zM39 129h2v1h-2zM43 129h2v2h-2zM47 129h2v2h-2zM51 129h2v2h-2zM55 129h2v2h-2zM59 129h2v2h-2zM63 129h2v2h-2zM9 131h2v2h-2zM13 131h2v2h-2zM21 131h2v1h-2zM25 131h2v2h-2zM29 131h2v1h-2zM33 131h2v2h-2zM37 131h2v2h-2zM41 131h2v2h-2zM45 131h2v2h-2zM53 131h2v2h-2zM57 131h2v2h-2zM61 131h2v2h-2zM7 133h2v1h-2zM11 133h2v2h-2zM19 133h2v2h-2zM23 133h2v2h-2zM27 133h2v2h-2zM31 133h2v2h-2zM35 133h2v2h-2zM39 133h2v2h-2zM43 133h2v2h-2zM47 133h2v2h-2zM51 133h2v2h-2zM55 133h2v1h-2zM59 133h2v1h-2zM9 135h2v1h-2zM17 135h2v2h-2zM21 135h2v2h-2zM25 135h2v2h-2zM37 135h2v2h-2zM45 135h2v1h-2zM53 135h2v2h-2zM57 135h2v2h-2zM61 135h2v2h-2zM7 137h2v2h-2zM11 137h2v2h-2zM15 137h2v2h-2zM19 137h2v2h-2zM23 137h2v2h-2zM27 137h2v2h-2zM31 137h2v1h-2zM35 137h2v2h-2zM39 137h2v2h-2zM43 137h2v2h-2zM47 137h2v2h-2zM51 137h2v2h-2zM55 137h2v2h-2zM59 137h2v2h-2zM63 137h2v1h-2zM9 139h2v1h-2zM13 139h2v2h-2zM17 139h2v2h-2zM21 139h2v2h-2zM25 139h2v2h-2zM29 139h2v2h-2zM33 139h2v2h-2zM37 139h2v2h-2zM41 139h2v2h-2zM57 139h2v2h-2zM7 141h2v2h-2zM11 141h2v2h-2zM15 141h2v1h-2zM19 141h2v2h-2zM27 141h2v2h-2zM31 141h2v2h-2zM35 141h2v1h-2zM47 141h2v2h-2zM51 141h2v2h-2zM55 141h2v2h-2zM59 141h2v2h-2zM63 141h2v2h-2zM9 143h2v2h-2zM13 143h2v2h-2zM17 143h2v1h-2zM21 143h2v2h-2zM25 143h2v2h-2zM29 143h2v2h-2zM33 143h2v2h-2zM37 143h2v1h-2zM49 143h2v2h-2zM53 143h2v1h-2zM57 143h2v2h-2zM61 143h2v2h-2zM7 145h2v2h-2zM11 145h2v2h-2zM15 145h2v2h-2zM19 145h2v2h-2zM23 145h2v2h-2zM27 145h2v2h-2zM31 145h2v2h-2zM51 145h2v2h-2zM55 145h2v2h-2zM59 145h2v2h-2zM63 145h2v1h-2zM9 147h2v2h-2zM13 147h2v1h-2zM17 147h2v2h-2zM21 147h2v2h-2zM25 147h2v2h-2zM29 147h2v1h-2zM33 147h2v2h-2zM53 147h2v2h-2zM57 147h2v1h-2zM61 147h2v2h-2zM7 149h2v2h-2zM11 149h2v2h-2zM15 149h2v1h-2zM19 149h2v1h-2zM23 149h2v2h-2zM27 149h2v2h-2zM55 149h2v2h-2zM59 149h2v2h-2zM63 149h2v2h-2zM9 151h2v2h-2zM13 151h2v2h-2zM17 151h2v1h-2zM21 151h2v2h-2zM25 151h2v2h-2zM29 151h2v2h-2zM57 151h2v1h-2zM7 153h2v2h-2zM11 153h2v2h-2zM15 153h2v2h-2zM19 153h2v1h-2zM23 153h2v2h-2zM27 153h2v2h-2zM31 153h2v2h-2zM55 153h2v2h-2zM59 153h2v2h-2zM63 153h2v2h-2zM9 155h2v2h-2zM13 155h2v1h-2zM17 155h2v2h-2zM21 155h2v2h-2zM25 155h2v2h-2zM29 155h2v2h-2zM33 155h2v2h-2zM53 155h2v2h-2zM61 155h2v2h-2zM7 157h2v2h-2zM11 157h2v2h-2zM15 157h2v1h-2zM23 157h2v2h-2zM27 157h2v2h-2zM31 157h2v2h-2zM35 157h2v2h-2zM51 157h2v1h-2zM55 157h2v2h-2zM63 157h2v2h-2zM9 159h2v2h-2zM13 159h2v2h-2zM17 159h2v1h-2zM21 159h2v2h-2zM25 159h2v2h-2zM29 159h2v2h-2zM33 159h2v2h-2zM37 159h2v2h-2zM53 159h2v1h-2zM57 159h2v2h-2zM61 159h2v2h-2zM7 161h2v1h-2zM11 161h2v2h-2zM15 161h2v2h-2zM19 161h2v2h-2zM27 161h2v2h-2zM31 161h2v2h-2zM35 161h2v2h-2zM39 161h2v2h-2zM47 161h2v2h-2zM51 161h2v2h-2zM55 161h2v1h-2zM59 161h2v2h-2zM63 161h2v2h-2zM9 163h2v2h-2zM17 163h2v1h-2zM21 163h2v1h-2zM25 163h2v2h-2zM29 163h2v2h-2zM33 163h2v2h-2zM37 163h2v2h-2zM41 163h2v1h-2zM45 163h2v2h-2zM49 163h2v2h-2zM53 163h2v2h-2zM61 163h2v2h-2zM7 165h2v2h-2zM11 165h2v2h-2zM15 165h2v2h-2zM19 165h2v2h-2zM23 165h2v2h-2zM27 165h2v2h-2zM31 165h2v2h-2zM35 165h2v2h-2zM39 165h2v2h-2zM43 165h2v2h-2zM47 165h2v2h-2zM51 165h2v2h-2zM55 165h2v2h-2zM59 165h2v2h-2zM63 165h2v2h-2zM9 167h2v2h-2zM17 167h2v2h-2zM21 167h2v2h-2zM25 167h2v2h-2zM33 167h2v2h-2zM41 167h2v2h-2zM45 167h2v2h-2zM49 167h2v2h-2zM53 167h2v2h-2zM57 167h2v2h-2zM61 167h2v2h-2zM7 169h2v2h-2zM11 169h2v2h-2zM15 169h2v2h-2zM19 169h2v1h-2zM23 169h2v2h-2zM35 169h2v2h-2zM43 169h2v1h-2zM47 169h2v1h-2zM51 169h2v1h-2zM55 169h2v1h-2zM63 169h2v2h-2zM9 171h2v2h-2zM13 171h2v1h-2zM17 171h2v2h-2zM21 171h2v2h-2zM25 171h2v2h-2zM29 171h2v2h-2zM33 171h2v2h-2zM37 171h2v2h-2zM41 171h2v2h-2zM45 171h2v2h-2zM49 171h2v2h-2zM53 171h2v2h-2zM57 171h2v2h-2zM61 171h2v2h-2zM7 173h2v2h-2zM11 173h2v2h-2zM15 173h2v2h-2zM19 173h2v1h-2zM23 173h2v1h-2zM27 173h2v2h-2zM31 173h2v2h-2zM35 173h2v2h-2zM43 173h2v1h-2zM47 173h2v2h-2zM51 173h2v2h-2zM55 173h2v2h-2zM63 173h2v2h-2zM9 175h2v2h-2zM13 175h2v1h-2zM17 175h2v2h-2zM21 175h2v2h-2zM25 175h2v2h-2zM29 175h2v2h-2zM33 175h2v2h-2zM37 175h2v2h-2zM45 175h2v2h-2zM49 175h2v2h-2zM53 175h2v2h-2zM57 175h2v2h-2zM61 175h2v2h-2zM7 177h2v2h-2zM11 177h2v2h-2zM15 177h2v1h-2zM19 177h2v1h-2zM23 177h2v2h-2zM27 177h2v2h-2zM35 177h2v2h-2zM43 177h2v2h-2zM47 177h2v2h-2zM51 177h2v2h-2zM55 177h2v1h-2zM59 177h2v2h-2zM9 179h2v2h-2zM13 179h2v2h-2zM17 179h2v1h-2zM21 179h2v1h-2zM25 179h2v2h-2zM29 179h2v1h-2zM33 179h2v2h-2zM37 179h2v2h-2zM41 179h2v1h-2zM45 179h2v1h-2zM49 179h2v2h-2zM53 179h2v2h-2zM57 179h2v2h-2zM7 181h2v2h-2zM11 181h2v2h-2zM15 181h2v2h-2zM19 181h2v2h-2zM23 181h2v2h-2zM31 181h2v2h-2zM35 181h2v1h-2zM39 181h2v1h-2zM43 181h2v2h-2zM47 181h2v2h-2zM51 181h2v2h-2zM55 181h2v1h-2zM59 181h2v2h-2zM63 181h2v1h-2zM9 183h2v2h-2zM13 183h2v2h-2zM17 183h2v2h-2zM21 183h2v2h-2zM29 183h2v2h-2zM33 183h2v1h-2zM37 183h2v1h-2zM45 183h2v2h-2zM49 183h2v2h-2zM57 183h2v2h-2zM61 183h2v2h-2zM7 185h2v2h-2zM11 185h2v2h-2zM15 185h2v2h-2zM19 185h2v1h-2zM23 185h2v2h-2zM27 185h2v2h-2zM31 185h2v2h-2zM35 185h2v2h-2zM39 185h2v2h-2zM47 185h2v1h-2zM51 185h2v2h-2zM55 185h2v1h-2zM59 185h2v2h-2zM63 185h2v2h-2zM9 187h2v2h-2zM13 187h2v1h-2zM17 187h2v2h-2zM21 187h2v2h-2zM25 187h2v2h-2zM29 187h2v2h-2zM33 187h2v2h-2zM37 187h2v1h-2zM41 187h2v1h-2zM45 187h2v2h-2zM49 187h2v2h-2zM53 187h2v2h-2zM57 187h2v1h-2zM61 187h2v2h-2zM7 189h2v2h-2zM11 189h2v1h-2zM15 189h2v2h-2zM19 189h2v2h-2zM23 189h2v1h-2zM27 189h2v2h-2zM31 189h2v1h-2zM35 189h2v2h-2zM39 189h2v2h-2zM43 189h2v1h-2zM51 189h2v2h-2zM59 189h2v2h-2zM63 189h2v2h-2zM7 185h5v5h-5zM11 152h5v4h-5zM25 159h7v3h-7zM18 140h6v3h-6zM16 134h4v5h-4zM36 168h6v5h-6zM7 134h6v3h-6zM18 173h4v4h-4zM19 166h4v3h-4zM10 158h4v5h-4zM20 149h3v4h-3zM31 136h3v4h-3zM13 133h3v3h-3zM25 133h6v4h-6zM45 129h4v3h-4zM30 134h6v3h-6zM11 147h7v4h-7zM13 170h5v4h-5zM8 172h5v5h-5zM54 179h6v5h-6zM26 153h4v5h-4zM36 178h6v3h-6zM55 163h5v5h-5zM54 136h5v3h-5zM27 142h4v3h-4zM10 163h3v4h-3zM46 180h4v3h-4zM43 125h4v3h-4zM43 168h5v5h-5zM51 174h5v3h-5zM27 134h7v5h-7zM20 145h6v5h-6z"/><path fill="currentColor" d="M42 141L52 151L42 161L32 151z"/><path fill="#000" d="M4 43h12v1h-12zM10 40h1v6h-1zM4 55h11v1h-11zM9 52h1v7h-1zM81 34h2v1h-2zM92 34h2v1h-2zM82 76h1v1h-1zM85 76h1v1h-1zM88 76h1v1h-1zM91 76h1v1h-1zM94 76h1v1h-1zM97 76h1v1h-1zM82 79h1v1h-1zM85 79h1v1h-1zM88 79h1v1h-1zM91 79h1v1h-1zM94 79h1v1h-1zM97 79h1v1h-1zM167 29h10v1h-10zM172 26h1v6h-1zM163 56h1v3h-1zM165 56h1v3h-1zM167 56h1v3h-1zM169 56h1v3h-1zM171 56h1v3h-1zM173 56h1v3h-1zM193 56h1v3h-1zM195 56h1v3h-1zM197 56h1v3h-1zM199 56h1v3h-1zM201 56h1v3h-1zM203 56h1v3h-1zM205 56h1v3h-1zM163 72h1v3h-1zM165 72h1v3h-1zM167 72h1v3h-1zM169 72h1v3h-1zM171 72h1v3h-1zM173 72h1v3h-1zM193 72h1v3h-1zM195 72h1v3h-1zM197 72h1v3h-1zM199 72h1v3h-1zM201 72h1v3h-1zM203 72h1v3h-1zM205 72h1v3h-1zM189 106h2v2h-2zM208 136h2v2h-2zM202 106h2v2h-2zM182 136h2v2h-2zM190 106h2v2h-2zM182 136h2v2h-2zM199 140h2v2h-2zM208 115h2v2h-2zM189 106h2v2h-2zM208 106h2v2h-2zM193 122h1v1h-1zM195 122h1v1h-1zM197 122h1v1h-1zM199 122h1v1h-1zM193 124h1v1h-1zM195 124h1v1h-1zM197 124h1v1h-1zM199 124h1v1h-1zM193 126h1v1h-1zM195 126h1v1h-1zM197 126h1v1h-1zM199 126h1v1h-1zM193 128h1v1h-1zM195 128h1v1h-1zM197 128h1v1h-1zM199 128h1v1h-1zM177 92h1v1h-1zM181 92h1v1h-1zM185 92h1v1h-1zM189 92h1v1h-1zM193 92h1v1h-1zM289 119h2v1h-2zM300 119h2v1h-2z"/><path fill="none" stroke="currentColor" stroke-width="1" d="M107.0 47.5h0.0a2.5 2.5 0 0 1 2.5 2.5v0.0a2.5 2.5 0 0 1 -2.5 2.5h-0.0a2.5 2.5 0 0 1 -2.5 -2.5v-0.0a2.5 2.5 0 0 1 2.5 -2.5zM124 29l3 -2l8 8l-1 4l-4 0l-7 -7z M126 30l6 6M16.5 78.5h0.0a3.0 3.0 0 0 1 3.0 3.0v11.0a3.0 3.0 0 0 1 -3.0 3.0h-0.0a3.0 3.0 0 0 1 -3.0 -3.0v-11.0a3.0 3.0 0 0 1 3.0 -3.0zM45.0 78.5h0.0a1.5 1.5 0 0 1 1.5 1.5v14.0a1.5 1.5 0 0 1 -1.5 1.5h-0.0a1.5 1.5 0 0 1 -1.5 -1.5v-14.0a1.5 1.5 0 0 1 1.5 -1.5zM139.0 82.5h6.0a2.5 2.5 0 0 1 2.5 2.5v0.0a2.5 2.5 0 0 1 -2.5 2.5h-6.0a2.5 2.5 0 0 1 -2.5 -2.5v-0.0a2.5 2.5 0 0 1 2.5 -2.5zM154.0 82.5h9.0a2.5 2.5 0 0 1 2.5 2.5v0.0a2.5 2.5 0 0 1 -2.5 2.5h-9.0a2.5 2.5 0 0 1 -2.5 -2.5v-0.0a2.5 2.5 0 0 1 2.5 -2.5zM132.0 88.5h0.0a1.5 1.5 0 0 1 1.5 1.5v12.0a1.5 1.5 0 0 1 -1.5 1.5h-0.0a1.5 1.5 0 0 1 -1.5 -1.5v-12.0a1.5 1.5 0 0 1 1.5 -1.5zM6.0 104L9 108.0L6.0 112L3 108.0zM282.0 89L286 93.5L282.0 98L278 93.5zM127 184l3 -3l6 7l-3 3zM133 182l3 -2l5 7l-3 3zM121 203.5l3 -4l2 3l2 -3l3 4M121 213.5l3 -4l2 3l2 -3l3 4M138.0 219.5h0.0a1.5 1.5 0 0 1 1.5 1.5v13.0a1.5 1.5 0 0 1 -1.5 1.5h-0.0a1.5 1.5 0 0 1 -1.5 -1.5v-13.0a1.5 1.5 0 0 1 1.5 -1.5zM220.5 246.5h0.0a3.0 3.0 0 0 1 3.0 3.0v4.0a3.0 3.0 0 0 1 -3.0 3.0h-0.0a3.0 3.0 0 0 1 -3.0 -3.0v-4.0a3.0 3.0 0 0 1 3.0 -3.0zM197.0 240.5h0.0a1.5 1.5 0 0 1 1.5 1.5v9.0a1.5 1.5 0 0 1 -1.5 1.5h-0.0a1.5 1.5 0 0 1 -1.5 -1.5v-9.0a1.5 1.5 0 0 1 1.5 -1.5zM223.5 220.5h1.0a3.0 3.0 0 0 1 3.0 3.0v5.0a3.0 3.0 0 0 1 -3.0 3.0h-1.0a3.0 3.0 0 0 1 -3.0 -3.0v-5.0a3.0 3.0 0 0 1 3.0 -3.0zM305.5 194.5h0.0a2.0 2.0 0 0 1 2.0 2.0v13.0a2.0 2.0 0 0 1 -2.0 2.0h-0.0a2.0 2.0 0 0 1 -2.0 -2.0v-13.0a2.0 2.0 0 0 1 2.0 -2.0z" shape-rendering="auto"/></g></defs><path fill="#0000ff" d="M189 11h672v2h-672zM189 11h1v797h-1zM860 11h1v797h-1zM189 807h672v1h-672z"/><path fill="none" stroke="#e8e8ff" stroke-width="1" d="M188.500 647v160.500h120M182.500 656l6-9 6 9M303.500 799.500l5 8-5 8" shape-rendering="auto"/><path fill="none" stroke="#2ec200" d="M828 20l3 5-3 5-3-5z" shape-rendering="auto"/><path fill="none" stroke="#2ec200" d="M240 793l3 5-3 5-3-5z" shape-rendering="auto"/><path fill="none" stroke="#2ec200" d="M822 792l3 5-3 5-3-5z" shape-rendering="auto"/><path fill="#00ff00" stroke="#ff9a00" stroke-width=".8" d="M240 24.500l3 4.500-3 4.500-3-4.500z" shape-rendering="auto"/><g transform="translate(212,24)"><path fill="#ff9a00" d="M1 38h16v9h-16zM1 50h15v10h-15zM80 66h5v6h-5zM91 66h5v6h-5zM80 74h21v8h-21zM104 42h6v3h-6zM104 47h6v6h-6zM112 47h3v6h-3zM123 28h8v5h-8zM142 30h13v9h-13zM121 45h14v2h-14zM120 48h15v14h-15zM107 66h11v6h-11zM13 78h7v18h-7zM43 78h4v18h-4zM22 79h9v3h-9zM34 79h9v3h-9zM17 94h12v5h-12zM31 94h12v5h-12zM51 84h7v4h-7zM48 91h3v3h-3zM63 89h3v5h-3zM78 88h7v7h-7zM96 88h5v7h-5zM70 96h16v6h-16zM88 96h17v7h-17zM107 98h10v4h-10zM120 99h8v3h-8zM136 82h12v6h-12zM151 82h15v6h-15zM130 88h4v16h-4zM33 105h4v6h-4zM33 117h4v5h-4zM30 112h3v3h-3zM39 112h3v3h-3zM164 24h14v9h-14zM260 30h14v9h-14zM269 30h14v9h-14zM278 32h16v11h-16zM272 65h6v6h-6zM272 77h6v6h-6zM168 82h17v7h-17zM187 82h15v7h-15zM205 82h16v7h-16zM223 82h8v7h-8zM234 82h7v7h-7zM250 82h7v7h-7zM268 90h10v5h-10zM273 95h5v6h-5zM233 93h14v3h-14zM250 90h15v6h-15zM137 91h26v52h-26zM144 101h12v22h-12zM181 105h30v38h-30zM144 164h28v29h-28zM172 95h3v6h-3zM177 95h4v6h-4zM217 95h5v6h-5zM224 95h5v6h-5zM217 106h5v6h-5zM224 106h5v6h-5zM234 104h3v24h-3zM154 100h3v20h-3zM166 113h11v8h-11zM166 123h11v8h-11zM273 104h2v36h-2zM277 104h5v36h-5zM288 100h3v6h-3zM299 100h3v6h-3zM288 147h3v5h-3zM299 147h3v5h-3zM95 118h21v27h-21zM98 121h4v6h-4zM103 121h4v6h-4zM108 121h4v6h-4zM98 128h4v6h-4zM103 128h4v6h-4zM108 128h4v6h-4zM98 135h4v6h-4zM103 135h4v6h-4zM108 135h4v6h-4zM77 164h22v43h-22zM80 167h4v6h-4zM85 167h4v6h-4zM90 167h4v6h-4zM80 174h4v6h-4zM85 174h4v6h-4zM90 174h4v6h-4zM80 181h4v6h-4zM85 181h4v6h-4zM90 181h4v6h-4zM80 188h4v6h-4zM85 188h4v6h-4zM90 188h4v6h-4zM80 195h4v6h-4zM85 195h4v6h-4zM90 195h4v6h-4zM242 176h21v28h-21zM245 179h7v6h-7zM253 179h7v6h-7zM245 186h7v6h-7zM253 186h7v6h-7zM245 193h7v6h-7zM253 193h7v6h-7zM1 127h4v22h-4zM1 153h4v24h-4zM1 180h4v23h-4zM126 131h4v23h-4zM131 134h3v21h-3zM126 158h4v23h-4zM131 158h3v20h-3zM127 182h8v5h-8zM120 197h11v8h-11zM120 207h11v8h-11zM20 218h16v7h-16zM38 218h19v7h-19zM59 218h17v7h-17zM78 218h18v7h-18zM98 218h17v7h-17zM119 218h17v7h-17zM78 230h4v5h-4zM93 230h7v5h-7zM104 230h4v5h-4zM76 238h3v6h-3zM106 238h3v6h-3zM78 246h4v4h-4zM104 246h4v4h-4zM141 238h16v5h-16zM160 238h16v5h-16zM179 238h16v5h-16zM136 219h4v17h-4zM200 252h14v5h-14zM217 246h7v11h-7zM195 240h4v13h-4zM230 219h10v7h-10zM243 219h10v7h-10zM255 219h11v7h-11zM269 219h18v7h-18zM289 219h15v7h-15zM220 220h8v12h-8zM303 171h5v21h-5zM303 194h5v18h-5zM284 161h6v6h-6zM300 161h6v6h-6zM227 158h7v59h-7zM263 169h4v6h-4zM243 101h5v2h-5zM241 136h14v6h-14zM272 156h8v6h-8zM195 147h16v7h-16zM232 97h7v5h-7zM252 171h3v3h-3zM150 226h5v7h-5zM200 155h16v7h-16zM47 207h12v6h-12zM291 191h4v4h-4zM130 121h6v9h-6zM216 169h3v3h-3zM262 148h16v7h-16zM158 203h16v7h-16zM174 223h3v4h-3zM294 176h4v14h-4zM166 194h4v6h-4zM174 184h6v5h-6zM94 148h10v8h-10zM79 109h5v11h-5zM101 184h10v5h-10zM261 207h5v11h-5zM58 194h7v5h-7zM172 190h6v5h-6zM79 210h5v7h-5zM151 156h9v7h-9zM168 147h4v6h-4zM212 202h6v9h-6zM158 144h4v6h-4zM293 152h4v14h-4zM179 163h4v3h-4zM120 145h5v4h-5zM295 195h3v7h-3zM89 156h12v6h-12zM144 214h4v3h-4zM109 169h4v6h-4zM102 34h5v5h-5zM106 145h5v11h-5zM132 204h4v4h-4zM174 229h8v6h-8zM241 112h4v3h-4zM124 110h5v11h-5zM192 207h5v5h-5zM102 197h6v5h-6zM85 207h3v3h-3zM241 105h6v4h-6zM71 114h5v11h-5zM210 188h4v6h-4zM155 197h7v5h-7zM265 142h6v5h-6zM299 214h5v4h-5zM208 165h5v2h-5zM54 119h8v6h-8zM220 179h5v7h-5zM68 172h5v4h-5zM146 152h5v4h-5zM263 102h6v4h-6zM304 122h4v3h-4zM77 103h5v2h-5zM150 196h3v3h-3zM89 104h6v5h-6zM95 110h5v2h-5zM198 192h4v14h-4zM168 104h7v5h-7zM229 129h7v5h-7zM214 212h8v6h-8zM304 138h5v11h-5zM136 175h6v4h-6zM284 148h3v7h-3zM157 229h5v4h-5zM102 104h4v6h-4zM221 209h5v2h-5zM80 154h5v2h-5zM283 169h4v3h-4zM233 150h3v3h-3zM77 148h4v3h-4zM157 151h5v4h-5zM245 88h3v4h-3zM135 214h5v2h-5zM187 205h4v6h-4zM96 104h3v4h-3zM283 137h4v6h-4zM166 221h5v2h-5zM67 177h3v4h-3zM67 161h4v3h-4zM43 205h3v3h-3zM84 131h3v2h-3zM141 185h3v1h-3zM67 137h3v1h-3zM197 236h3v2h-3zM284 135h3v1h-3zM249 101h3v1h-3zM72 130h3v1h-3zM190 214h3v2h-3zM92 215h3v1h-3zM150 222h3v1h-3zM256 107h3v1h-3zM150 224h3v1h-3zM191 146h3v1h-3zM292 145h3v2h-3zM276 193h3v1h-3zM154 56h58v21h-58zM30 227h41v22h-41zM229 228h48v22h-48zM77 229h31v20h-31zM79 19h16v54h-16zM286 99h17v52h-17zM37 130h3v4h-3zM37 133h6v4h-6zM52 175h5v4h-5zM54 150h6v4h-6zM21 135h6v3h-6zM17 162h3v4h-3zM49 159h6v4h-6zM10 182h6v4h-6zM53 158h6v2h-6zM29 180h3v2h-3zM19 131h3v3h-3zM56 134h5v3h-5zM14 150h6v2h-6zM50 178h3v4h-3zM23 140h3v2h-3zM31 168h6v3h-6zM18 158h5v4h-5zM20 170h6v2h-6zM49 156h6v4h-6zM46 182h3v4h-3zM31 154h3v2h-3zM38 175h6v3h-6zM34 145h6v3h-6zM27 172h6v4h-6zM50 165h6v4h-6z"/><path fill="#b23a2c" d="M122 50h11v10h-11zM141 97h18v30h-18zM183 107h26v34h-26zM146 166h24v25h-24zM97 120h17v23h-17zM79 166h18v39h-18zM246 109h18v24h-18zM22 192h17v21h-17zM244 178h17v24h-17zM155 61h56v11h-56zM158 57h1v19h-1zM160 57h1v19h-1zM162 57h1v19h-1zM164 57h1v19h-1zM200 57h1v19h-1zM202 57h1v19h-1zM204 57h1v19h-1zM206 57h1v19h-1zM31 232h39v12h-39zM34 228h1v20h-1zM36 228h1v20h-1zM38 228h1v20h-1zM40 228h1v20h-1zM59 228h1v20h-1zM61 228h1v20h-1zM63 228h1v20h-1zM65 228h1v20h-1zM230 233h46v12h-46zM233 229h1v20h-1zM235 229h1v20h-1zM237 229h1v20h-1zM239 229h1v20h-1zM265 229h1v20h-1zM267 229h1v20h-1zM269 229h1v20h-1zM271 229h1v20h-1zM82 233h21v12h-21zM83 20h9v52h-9zM290 101h9v48h-9z"/><path fill="#ff9a00" d="M184 108h24v1h-24zM184 110h24v1h-24zM184 112h24v1h-24zM184 114h24v1h-24zM184 116h24v1h-24zM184 118h24v1h-24zM184 120h24v1h-24zM184 122h24v1h-24zM184 124h24v1h-24zM184 126h24v1h-24zM184 128h24v1h-24zM184 130h24v1h-24zM184 132h24v1h-24zM184 134h24v1h-24zM184 136h24v1h-24zM184 138h24v1h-24zM184 108h1v32h-1zM187 108h1v32h-1zM190 108h1v32h-1zM193 108h1v32h-1zM196 108h1v32h-1zM199 108h1v32h-1zM202 108h1v32h-1zM205 108h1v32h-1zM147 167h22v1h-22zM147 169h22v1h-22zM147 171h22v1h-22zM147 173h22v1h-22zM147 175h22v1h-22zM147 177h22v1h-22zM147 179h22v1h-22zM147 181h22v1h-22zM147 183h22v1h-22zM147 185h22v1h-22zM147 187h22v1h-22zM147 189h22v1h-22zM147 167h1v23h-1zM150 167h1v23h-1zM153 167h1v23h-1zM156 167h1v23h-1zM159 167h1v23h-1zM162 167h1v23h-1zM165 167h1v23h-1zM168 167h1v23h-1zM247 110h16v1h-16zM247 113h16v1h-16zM247 116h16v1h-16zM247 119h16v1h-16zM247 122h16v1h-16zM247 125h16v1h-16zM247 128h16v1h-16zM247 131h16v1h-16zM247 110h1v22h-1zM250 110h1v22h-1zM253 110h1v22h-1zM256 110h1v22h-1zM259 110h1v22h-1zM262 110h1v22h-1zM23 193h15v1h-15zM23 196h15v1h-15zM23 199h15v1h-15zM23 202h15v1h-15zM23 205h15v1h-15zM23 208h15v1h-15zM23 211h15v1h-15zM23 193h1v19h-1zM26 193h1v19h-1zM29 193h1v19h-1zM32 193h1v19h-1zM35 193h1v19h-1z"/><path fill="#00ff00" d="M5 41h7v1h-7zM5 44h7v1h-7zM5 53h6v1h-6zM5 57h6v1h-6zM9 62h4v7h-4zM17 62h5v13h-5zM17 76h5v3h-5zM81 67h3v4h-3zM92 67h3v4h-3zM81 75h19v6h-19zM98 40h3v9h-3zM105 43h4v1h-4zM105 48h4v4h-4zM113 48h1v4h-1zM144 33h9v1h-9zM139 50h14v4h-14zM124 36h3v9h-3zM124 50h7v8h-7zM119 62h16v5h-16zM103 61h6v4h-6zM98 67h6v7h-6zM120 67h9v5h-9zM107 74h6v3h-6zM117 73h5v13h-5zM123 77h4v13h-4zM111 87h3v3h-3zM14 80h5v14h-5zM44 80h2v14h-2zM23 80h7v1h-7zM35 80h7v1h-7zM20 84h12v9h-12zM34 84h7v10h-7zM18 95h10v3h-10zM32 95h10v3h-10zM52 85h5v2h-5zM49 92h1v1h-1zM58 90h4v5h-4zM64 90h1v3h-1zM79 89h5v5h-5zM97 89h3v5h-3zM71 98h14v2h-14zM89 98h15v3h-15zM108 99h8v2h-8zM121 100h6v1h-6zM137 84h10v2h-10zM152 84h13v2h-13zM131 89h2v14h-2zM17 107h5v4h-5zM25 106h5v5h-5zM34 106h2v4h-2zM34 118h2v3h-2zM31 113h1v1h-1zM40 113h1v1h-1zM168 27h5v1h-5zM168 30h5v1h-5zM262 33h10v1h-10zM271 33h10v1h-10zM280 35h12v1h-12zM266 50h3v7h-3zM276 50h2v6h-2zM281 58h5v10h-5zM273 66h4v4h-4zM273 78h4v4h-4zM265 71h4v4h-4zM265 76h4v4h-4zM265 81h3v6h-3zM269 73h3v4h-3zM278 73h4v3h-4zM169 84h15v3h-15zM188 84h13v3h-13zM206 84h14v3h-14zM224 83h6v5h-6zM235 83h5v5h-5zM251 83h5v5h-5zM269 91h8v3h-8zM274 96h3v4h-3zM234 94h12v1h-12zM251 92h13v2h-13zM145 102h3v4h-3zM149 102h3v4h-3zM153 102h3v4h-3zM145 107h3v4h-3zM149 107h3v4h-3zM153 107h3v4h-3zM145 112h3v4h-3zM149 112h3v4h-3zM153 112h3v4h-3zM145 117h3v4h-3zM149 117h3v4h-3zM153 117h3v4h-3zM140 130h20v10h-20zM175 91h22v4h-22zM197 91h9v12h-9zM173 96h1v4h-1zM178 96h2v4h-2zM183 95h10v7h-10zM218 96h3v4h-3zM225 96h3v4h-3zM218 107h3v4h-3zM225 107h3v4h-3zM217 115h6v7h-6zM224 115h6v7h-6zM217 122h6v7h-6zM224 122h5v6h-5zM235 106h1v20h-1zM162 95h3v25h-3zM155 101h1v18h-1zM167 115h9v4h-9zM167 125h9v4h-9zM274 106h0v32h0zM278 105h3v34h-3zM289 101h1v4h-1zM300 101h1v4h-1zM289 148h1v3h-1zM300 148h1v3h-1zM99 122h2v4h-2zM104 122h2v4h-2zM109 122h2v4h-2zM99 129h2v4h-2zM104 129h2v4h-2zM109 129h2v4h-2zM99 136h2v4h-2zM104 136h2v4h-2zM109 136h2v4h-2zM81 168h2v4h-2zM86 168h2v4h-2zM91 168h2v4h-2zM81 175h2v4h-2zM86 175h2v4h-2zM91 175h2v4h-2zM81 182h2v4h-2zM86 182h2v4h-2zM91 182h2v4h-2zM81 189h2v4h-2zM86 189h2v4h-2zM91 189h2v4h-2zM81 196h2v4h-2zM86 196h2v4h-2zM91 196h2v4h-2zM246 180h5v4h-5zM254 180h5v4h-5zM246 187h5v4h-5zM254 187h5v4h-5zM246 194h5v4h-5zM254 194h5v4h-5zM2 129h2v18h-2zM2 155h2v20h-2zM2 182h2v19h-2zM127 133h2v19h-2zM132 135h1v19h-1zM127 160h2v19h-2zM132 159h1v18h-1zM121 199h9v4h-9zM121 209h9v4h-9zM21 220h14v3h-14zM39 220h17v3h-17zM60 220h15v3h-15zM79 220h16v3h-16zM99 220h15v3h-15zM120 220h15v3h-15zM79 231h2v3h-2zM105 231h2v3h-2zM77 239h1v4h-1zM107 239h1v4h-1zM79 247h2v2h-2zM84 246h7v4h-7zM93 246h8v5h-8zM105 247h2v2h-2zM142 240h14v1h-14zM161 240h14v1h-14zM180 240h14v1h-14zM137 220h2v15h-2zM201 254h12v1h-12zM218 248h5v7h-5zM196 241h2v11h-2zM231 221h8v3h-8zM244 221h8v3h-8zM256 221h9v3h-9zM270 221h16v3h-16zM290 221h13v3h-13zM221 222h6v8h-6zM304 173h3v17h-3zM304 196h3v14h-3zM285 162h4v4h-4zM301 162h4v4h-4zM228 159h5v57h-5zM228 159h5v57h-5zM114 179h6v9h-6zM263 192h4v14h-4zM264 170h2v4h-2zM285 193h4v14h-4zM280 208h11v9h-11zM83 157h4v5h-4zM196 184h4v5h-4zM242 138h12v2h-12zM77 142h7v7h-7zM140 200h10v5h-10zM273 157h6v4h-6zM272 211h5v2h-5zM196 149h14v3h-14zM114 158h5v11h-5zM114 150h5v6h-5zM117 111h3v6h-3zM204 199h6v9h-6zM233 98h5v3h-5zM84 144h5v3h-5zM285 181h6v9h-6zM172 163h3v6h-3zM279 180h5v4h-5zM151 227h3v5h-3zM108 111h5v5h-5zM201 157h14v3h-14zM175 165h4v4h-4zM179 171h5v5h-5zM80 159h3v4h-3zM181 186h4v5h-4zM146 194h3v3h-3zM50 193h4v4h-4zM48 209h10v2h-10zM71 186h4v14h-4zM146 224h3v6h-3zM103 158h7v7h-7zM208 90h5v11h-5zM137 208h10v5h-10zM131 122h4v7h-4zM106 209h5v7h-5zM119 189h4v6h-4zM303 100h4v6h-4zM239 118h3v5h-3zM263 150h14v3h-14zM159 205h14v3h-14zM214 190h11v9h-11zM218 173h7v5h-7zM295 177h2v12h-2zM180 201h6v5h-6zM167 195h2v4h-2zM276 172h4v4h-4zM175 185h4v3h-4zM187 221h5v11h-5zM80 110h3v9h-3zM69 132h5v4h-5zM87 110h5v7h-5zM180 196h7v5h-7zM102 185h8v3h-8zM185 212h5v5h-5zM209 170h6v9h-6zM188 194h3v4h-3zM136 165h7v5h-7zM219 186h4v4h-4zM211 237h3v3h-3zM156 221h6v5h-6zM262 208h3v9h-3zM59 195h5v3h-5zM257 65h7v4h-7zM183 156h5v4h-5zM180 143h5v11h-5zM10 200h10v5h-10zM10 118h7v5h-7zM171 140h6v5h-6zM187 167h5v11h-5zM14 192h8v6h-8zM140 158h7v5h-7zM173 191h4v3h-4zM81 149h6v5h-6zM80 211h3v5h-3zM198 210h8v5h-8zM256 212h4v3h-4zM70 148h7v4h-7zM144 233h6v5h-6zM238 131h2v5h-2zM243 170h8v6h-8zM169 148h2v4h-2zM69 107h4v6h-4zM246 210h5v4h-5zM213 203h4v7h-4zM215 141h4v4h-4zM84 134h10v5h-10zM270 166h4v5h-4zM227 144h5v11h-5zM155 194h4v3h-4zM218 131h7v4h-7zM166 228h6v5h-6zM211 179h4v8h-4zM88 211h5v3h-5zM159 145h2v4h-2zM255 156h6v9h-6zM120 126h4v3h-4zM104 176h7v5h-7zM176 106h5v2h-5zM190 152h4v3h-4zM58 202h3v4h-3zM141 228h4v5h-4zM268 170h7v5h-7zM306 127h2v5h-2zM101 165h4v6h-4zM69 165h7v5h-7zM288 169h4v4h-4zM237 146h6v5h-6zM293 101h5v5h-5zM254 101h8v5h-8zM229 135h6v6h-6zM294 153h2v12h-2zM211 137h6v4h-6zM256 141h6v4h-6zM84 122h6v8h-6zM176 158h5v5h-5zM70 126h4v4h-4zM242 124h5v4h-5zM136 150h9v6h-9zM189 186h5v7h-5zM203 188h3v5h-3zM122 133h4v4h-4zM90 158h10v2h-10zM269 204h8v5h-8zM166 224h4v5h-4zM144 144h5v7h-5zM274 163h6v5h-6zM237 212h5v2h-5zM67 210h8v6h-8zM44 195h6v5h-6zM43 110h10v8h-10zM269 182h6v9h-6zM131 116h5v5h-5zM180 208h5v7h-5zM52 100h5v2h-5zM222 140h4v7h-4zM203 229h5v7h-5zM268 113h4v4h-4zM69 138h5v6h-5zM197 180h4v4h-4zM110 170h2v4h-2zM36 215h6v3h-6zM157 234h4v4h-4zM279 145h5v4h-5zM269 214h6v4h-6zM118 155h6v3h-6zM204 245h6v4h-6zM222 200h5v4h-5zM176 177h6v4h-6zM196 168h6v3h-6zM242 204h6v4h-6zM250 164h3v3h-3zM103 35h3v3h-3zM107 146h3v9h-3zM119 130h3v5h-3zM90 118h5v7h-5zM267 176h8v5h-8zM66 204h8v5h-8zM303 149h5v8h-5zM175 230h6v4h-6zM274 144h6v3h-6zM125 111h3v9h-3zM192 193h3v4h-3zM73 153h5v11h-5zM201 220h6v5h-6zM220 157h5v11h-5zM105 191h5v3h-5zM193 208h3v3h-3zM7 197h6v2h-6zM88 141h3v6h-3zM284 127h3v6h-3zM299 196h3v4h-3zM102 112h5v6h-5zM103 198h4v3h-4zM156 212h7v5h-7zM180 223h6v5h-6zM72 115h3v9h-3zM92 110h3v7h-3zM250 97h5v4h-5zM164 154h10v5h-10zM110 103h6v5h-6zM97 211h4v4h-4zM124 123h6v3h-6zM211 189h2v4h-2zM103 205h5v4h-5zM156 198h5v3h-5zM6 114h3v6h-3zM203 163h3v3h-3zM238 167h5v5h-5zM164 144h4v4h-4zM254 148h5v4h-5zM6 194h5v2h-5zM281 177h4v4h-4zM174 134h4v4h-4zM66 149h3v4h-3zM184 159h5v5h-5zM203 194h5v4h-5zM126 104h3v3h-3zM190 233h5v4h-5zM269 129h4v8h-4zM266 143h4v3h-4zM245 153h8v5h-8zM292 211h4v6h-4zM203 172h6v4h-6zM243 210h3v6h-3zM151 213h3v4h-3zM111 190h4v4h-4zM293 110h5v7h-5zM185 180h10v5h-10zM163 135h4v7h-4zM181 191h4v3h-4zM55 120h6v4h-6zM135 155h3v4h-3zM42 210h4v8h-4zM216 151h4v3h-4zM221 180h3v5h-3zM194 171h5v4h-5zM252 209h5v2h-5zM271 199h5v4h-5zM293 169h3v5h-3zM188 200h8v5h-8zM265 108h4v3h-4zM293 129h4v14h-4zM211 118h6v5h-6zM194 225h5v7h-5zM99 191h6v5h-6zM264 186h3v4h-3zM90 105h4v3h-4zM218 90h5v3h-5zM66 124h4v6h-4zM53 103h6v5h-6zM258 74h7v5h-7zM237 179h5v5h-5zM266 163h5v2h-5zM243 163h6v5h-6zM299 156h4v5h-4zM265 118h5v2h-5zM132 194h5v7h-5zM276 195h5v2h-5zM293 116h2v5h-2zM299 169h4v8h-4zM244 144h5v4h-5zM165 212h9v6h-9zM199 193h2v12h-2zM10 110h5v4h-5zM279 189h6v5h-6zM235 176h6v3h-6zM169 134h4v3h-4zM117 174h3v4h-3zM169 105h5v3h-5zM270 84h5v5h-5zM230 130h5v3h-5zM215 213h6v4h-6zM213 133h4v5h-4zM133 106h4v6h-4zM178 126h3v6h-3zM168 96h2v5h-2zM118 117h4v8h-4zM211 105h4v6h-4zM305 139h3v9h-3zM269 107h4v4h-4zM224 151h3v6h-3zM68 195h3v6h-3zM213 126h3v6h-3zM104 83h6v3h-6zM299 182h4v7h-4zM230 116h4v4h-4zM200 239h4v6h-4zM89 147h4v5h-4zM268 121h4v4h-4zM208 221h6v5h-6zM65 119h5v5h-5zM71 177h5v7h-5zM152 205h3v7h-3zM178 116h4v4h-4zM30 102h3v6h-3zM163 129h3v6h-3zM201 181h8v6h-8zM118 104h5v5h-5zM67 181h3v5h-3zM173 148h2v5h-2zM41 105h5v5h-5zM196 163h5v4h-5zM61 208h3v6h-3zM78 136h4v6h-4zM120 168h5v4h-5zM141 195h4v4h-4zM208 242h4v4h-4zM221 204h5v3h-5zM72 104h5v2h-5zM295 96h4v3h-4zM215 144h6v6h-6zM292 205h4v4h-4zM103 105h2v4h-2zM113 209h5v5h-5zM227 91h5v3h-5zM53 214h5v3h-5zM262 135h6v5h-6zM288 157h3v3h-3zM279 203h4v3h-4zM162 233h6v4h-6zM122 179h3v5h-3zM101 55h7v5h-7zM212 112h5v5h-5zM77 121h5v2h-5zM258 82h5v7h-5zM205 237h5v4h-5zM118 139h5v4h-5zM66 114h4v4h-4zM115 170h3v3h-3zM171 198h4v5h-4zM247 159h4v3h-4zM120 157h4v4h-4zM277 85h4v3h-4zM198 172h4v6h-4zM194 214h3v3h-3zM103 211h3v6h-3zM20 211h2v5h-2zM283 118h4v6h-4zM252 204h5v3h-5zM40 206h3v3h-3zM111 176h5v3h-5zM209 230h6v3h-6zM51 198h3v3h-3zM265 128h2v5h-2zM200 226h3v6h-3zM258 171h4v3h-4zM195 156h4v3h-4zM249 143h5v5h-5zM116 125h3v3h-3zM206 176h3v3h-3zM183 231h3v4h-3zM306 108h4v8h-4zM280 163h4v4h-4zM111 157h3v6h-3zM287 177h4v3h-4zM95 115h5v4h-5zM187 149h2v5h-2zM194 219h4v5h-4zM191 157h4v4h-4zM203 144h6v3h-6zM293 149h6v3h-6zM151 150h3v4h-3zM136 170h3v3h-3zM255 70h5v4h-5zM271 194h5v4h-5zM163 226h3v6h-3zM257 205h3v3h-3zM240 115h5v4h-5zM60 99h6v5h-6zM297 210h5v3h-5zM148 208h5v5h-5zM186 143h4v5h-4zM264 158h7v5h-7zM92 126h3v4h-3zM281 82h2v5h-2zM175 213h4v4h-4zM216 184h4v5h-4zM223 212h3v6h-3zM53 202h4v5h-4zM280 151h4v3h-4zM252 214h4v4h-4zM207 249h6v3h-6zM241 128h4v4h-4zM178 103h5v2h-5zM74 134h3v4h-3zM124 125h5v4h-5zM80 128h4v8h-4zM114 146h4v3h-4zM188 206h2v4h-2zM277 197h4v4h-4zM136 143h2v5h-2zM94 208h6v2h-6zM75 201h3v6h-3zM131 68h6v5h-6zM198 207h6v3h-6zM299 203h4v3h-4zM276 185h3v7h-3zM175 196h4v6h-4zM85 161h4v4h-4zM15 208h3v6h-3zM240 109h5v2h-5zM179 166h3v3h-3zM100 145h5v2h-5zM120 163h5v4h-5zM279 216h5v2h-5zM281 172h5v2h-5zM295 123h4v5h-4zM86 151h6v3h-6zM90 131h5v2h-5zM164 160h4v3h-4zM132 74h3v6h-3zM75 107h4v4h-4zM178 133h4v5h-4zM193 97h4v7h-4zM150 219h5v2h-5zM119 180h3v6h-3zM223 90h4v3h-4zM247 105h5v3h-5zM263 181h4v3h-4zM244 148h6v5h-6zM205 168h3v3h-3zM86 215h5v2h-5zM176 209h3v3h-3zM302 157h5v4h-5zM114 110h3v5h-3zM284 105h4v8h-4zM100 178h3v6h-3zM190 143h6v3h-6zM78 207h6v3h-6zM172 176h2v4h-2zM307 133h2v4h-2zM287 171h1v3h-1zM296 146h1v3h-1zM270 101h3v3h-3zM137 160h3v3h-3zM281 198h2v4h-2zM214 173h3v5h-3zM265 121h3v5h-3zM151 236h4v2h-4zM210 247h4v2h-4zM124 139h2v4h-2zM107 166h3v2h-3zM136 89h2v4h-2zM148 215h4v3h-4zM186 189h3v3h-3zM70 137h4v2h-4zM263 106h2v4h-2zM193 162h2v4h-2zM256 136h3v3h-3zM31 123h4v2h-4zM18 210h1v3h-1zM178 155h3v3h-3zM249 205h1v3h-1zM148 162h3v2h-3zM76 214h2v2h-2zM180 220h3v2h-3zM106 181h2v2h-2zM227 156h4v1h-4zM281 206h3v3h-3zM201 250h4v2h-4zM167 102h4v2h-4zM178 140h4v2h-4zM242 152h2v4h-2zM213 102h3v3h-3zM244 121h3v3h-3zM172 220h2v4h-2zM222 151h2v4h-2zM249 108h3v1h-3zM281 185h3v1h-3zM287 96h4v2h-4zM280 149h3v1h-3zM225 136h1v3h-1zM274 168h3v2h-3zM278 211h3v3h-3zM306 213h3v4h-3zM135 162h2v2h-2zM123 174h2v4h-2zM107 195h3v1h-3zM84 142h3v3h-3zM124 162h1v3h-1zM187 102h3v4h-3zM134 214h2v4h-2zM159 89h2v2h-2zM235 91h3v1h-3zM261 97h2v2h-2zM100 114h1v3h-1zM139 143h2v4h-2zM251 214h1v3h-1zM224 194h3v4h-3zM107 169h2v4h-2zM179 121h3v5h-3zM294 108h4v3h-4zM111 180h3v3h-3zM249 149h4v2h-4zM237 138h2v4h-2zM198 189h4v2h-4zM103 182h4v2h-4zM280 185h2v4h-2zM164 219h3v3h-3zM184 235h4v2h-4zM131 179h4v2h-4zM230 121h2v3h-2zM292 167h2v4h-2zM268 199h2v4h-2zM289 168h3v1h-3zM251 104h2v2h-2zM299 195h3v1h-3zM24 123h4v3h-4zM74 171h3v1h-3zM63 211h3v5h-3zM47 214h2v4h-2zM130 109h3v3h-3zM292 188h2v4h-2zM230 104h4v3h-4zM291 173h2v4h-2zM145 198h3v1h-3zM281 156h3v5h-3zM28 123h3v3h-3zM251 151h3v2h-3zM208 208h1v3h-1zM119 153h3v3h-3zM71 170h2v2h-2zM207 227h4v2h-4zM110 164h3v4h-3zM124 152h1v3h-1zM236 217h4v2h-4zM116 136h4v3h-4zM223 170h3v1h-3zM258 97h4v2h-4zM216 200h3v1h-3zM141 215h3v4h-3zM92 149h2v2h-2zM100 173h1v3h-1zM85 114h2v4h-2zM149 157h3v4h-3zM185 102h3v4h-3zM154 163h3v1h-3zM298 192h4v3h-4zM134 209h3v2h-3zM224 189h2v4h-2zM201 248h2v2h-2zM137 202h3v5h-3zM141 170h3v1h-3zM245 98h4v3h-4zM240 101h2v4h-2zM236 152h2v4h-2zM220 155h3v1h-3zM40 194h4v2h-4zM108 203h2v3h-2zM168 161h3v4h-3zM140 171h1v3h-1zM12 196h2v4h-2zM292 125h3v1h-3zM299 200h3v2h-3zM67 104h3v3h-3zM254 175h3v1h-3zM243 160h4v3h-4zM209 143h3v4h-3zM268 125h4v3h-4zM252 161h3v3h-3zM142 180h3v5h-3zM51 202h1v3h-1zM291 199h3v2h-3zM74 110h3v3h-3zM293 148h3v1h-3zM208 193h2v4h-2zM299 179h3v3h-3zM184 219h2v4h-2zM141 187h3v5h-3zM221 189h4v2h-4zM230 107h4v2h-4zM254 167h3v1h-3zM215 250h2v4h-2zM217 157h2v2h-2zM215 198h4v2h-4zM20 206h2v2h-2zM116 143h4v3h-4zM218 243h4v2h-4zM105 172h3v3h-3zM219 207h2v3h-2zM247 216h2v2h-2zM100 207h2v3h-2zM173 91h2v4h-2zM117 213h1v3h-1zM196 162h4v2h-4zM295 191h3v4h-3zM59 215h3v2h-3zM210 168h2v2h-2zM238 125h4v3h-4zM189 148h2v3h-2zM195 155h3v1h-3zM226 140h2v4h-2zM86 119h4v2h-4zM281 168h2v3h-2zM24 215h2v2h-2zM6 185h1v3h-1zM178 151h1v3h-1zM239 152h4v3h-4zM260 108h4v2h-4zM66 143h3v4h-3zM94 163h4v2h-4zM176 152h2v4h-2zM121 174h3v5h-3zM12 124h3v1h-3zM62 202h2v2h-2zM138 194h4v2h-4zM6 201h4v2h-4zM243 159h4v1h-4zM116 187h2v3h-2zM290 205h2v4h-2zM229 113h3v1h-3zM139 155h4v2h-4zM236 135h2v4h-2zM271 117h1v3h-1zM66 139h4v2h-4zM163 121h2v4h-2zM66 185h2v3h-2zM49 215h2v2h-2zM226 102h3v2h-3zM41 123h3v2h-3zM156 233h1v3h-1zM70 145h3v3h-3zM123 156h3v1h-3zM92 142h4v2h-4zM212 147h3v4h-3zM151 200h3v5h-3zM153 89h3v3h-3zM114 115h2v3h-2zM172 90h2v3h-2zM263 177h3v3h-3zM284 125h3v1h-3zM106 165h4v1h-4zM258 135h4v2h-4zM295 168h3v3h-3zM65 202h4v2h-4zM304 110h1v3h-1zM240 98h4v3h-4zM12 206h3v3h-3zM172 234h2v3h-2zM210 234h3v1h-3zM215 243h3v2h-3zM220 238h3v3h-3zM203 177h2v4h-2zM284 168h4v2h-4zM115 214h1v3h-1zM55 200h4v2h-4zM85 212h3v3h-3zM194 189h1v3h-1zM292 107h2v2h-2zM66 171h3v4h-3zM269 196h1v3h-1zM104 203h3v1h-3zM83 144h2v4h-2zM166 101h2v4h-2zM135 139h3v4h-3zM156 204h1v3h-1zM283 193h1v3h-1zM260 167h2v3h-2zM40 196h3v1h-3zM101 203h4v1h-4zM37 124h4v1h-4zM212 142h1v3h-1zM142 89h3v3h-3zM170 160h4v2h-4zM141 225h4v2h-4zM131 131h4v2h-4zM265 112h2v3h-2zM99 186h2v4h-2zM116 120h2v4h-2zM108 107h2v3h-2zM248 152h3v1h-3zM169 232h1v3h-1zM279 99h1v3h-1zM253 169h4v2h-4zM176 147h3v3h-3zM144 156h4v2h-4zM250 100h3v1h-3zM136 116h1v3h-1zM167 219h3v3h-3zM66 197h3v5h-3zM159 194h3v1h-3zM222 136h3v2h-3zM307 157h1v3h-1zM190 162h2v4h-2zM146 219h2v2h-2zM287 190h4v2h-4zM170 225h3v3h-3zM207 191h3v2h-3zM158 163h4v2h-4zM245 130h2v3h-2zM99 204h3v3h-3zM41 199h1v3h-1zM214 92h4v3h-4zM62 192h4v1h-4zM284 157h3v1h-3zM198 220h2v4h-2zM227 137h1v3h-1zM270 97h3v4h-3zM289 174h3v3h-3zM148 159h1v3h-1zM121 110h2v3h-2zM202 168h4v3h-4zM235 214h2v4h-2zM176 205h3v3h-3zM242 97h4v2h-4zM141 148h2v2h-2zM177 219h4v3h-4zM289 172h4v2h-4zM93 211h1v3h-1zM80 126h4v2h-4zM108 103h2v4h-2zM291 185h2v4h-2zM147 89h4v2h-4zM177 170h2v4h-2zM284 133h3v3h-3zM296 207h2v2h-2zM67 165h2v3h-2zM304 168h3v3h-3zM116 139h1v3h-1zM167 138h1v3h-1zM277 183h4v2h-4zM242 119h3v1h-3zM213 122h3v3h-3zM268 131h1v3h-1zM73 103h3v1h-3zM201 247h4v2h-4zM164 90h2v4h-2zM66 108h2v4h-2zM155 58h2v3h-2zM209 58h2v3h-2zM155 72h2v3h-2zM209 72h2v3h-2zM31 229h2v3h-2zM68 229h2v3h-2zM31 244h2v3h-2zM68 244h2v3h-2zM230 230h2v3h-2zM274 230h2v3h-2zM230 245h2v3h-2zM274 245h2v3h-2zM80 22h2v5h-2zM92 22h2v5h-2zM80 64h2v5h-2zM92 64h2v5h-2zM11 162h16v6h-16zM38 137h10v14h-10zM17 134h16v10h-16zM12 164h8v6h-8zM5 168h16v14h-16zM40 139h16v10h-16zM21 138h12v14h-12zM35 141h10v14h-10zM10 164h8v10h-8zM7 167h12v14h-12zM47 136h16v6h-16zM32 158h8v8h-8zM27 140h10v8h-10zM16 139h8v14h-8zM41 175h16v14h-16zM15 148h10v14h-10zM34 144h16v6h-16zM25 167h8v14h-8zM9 157h12v8h-12zM24 168h12v10h-12zM28 147h8v10h-8zM29 158h10v8h-10zM43 142h16v10h-16zM19 163h16v14h-16zM26 181h10v6h-10zM54 137h8v6h-8zM47 171h16v14h-16zM17 148h8v14h-8zM12 161h10v14h-10zM25 139h8v14h-8zM31 146h12v8h-12zM36 145h12v10h-12zM7 173h10v8h-10zM19 130h16v10h-16zM24 130h16v10h-16zM43 146h12v8h-12zM35 137h16v8h-16zM22 166h16v14h-16zM11 151h8v8h-8zM50 168h10v6h-10zM54 126h12v10h-12zM32 168h8v10h-8zM47 173h8v8h-8zM23 169h10v10h-10zM50 135h10v14h-10zM23 164h10v14h-10zM25 170h16v14h-16zM26 127h12v10h-12zM35 163h12v14h-12zM55 129h10v10h-10zM42 131h8v6h-8zM28 133h16v6h-16zM7 155h16v14h-16zM53 167h12v10h-12zM38 175h12v6h-12zM36 133h10v6h-10zM23 133h8v10h-8zM29 132h10v6h-10zM53 129h10v14h-10zM49 129h10v14h-10zM11 162h12v6h-12zM42 171h10v8h-10zM24 132h16v14h-16zM40 156h10v8h-10zM6 166h12v14h-12zM45 142h10v14h-10zM29 173h10v6h-10zM15 147h8v14h-8zM36 151h16v14h-16zM57 147h10v10h-10z"/><path fill="#000" d="M37 179h3v2h-3zM14 177h1v1h-1zM19 173h3v2h-3zM15 152h2v2h-2zM12 152h2v2h-2zM11 138h1v1h-1zM11 174h3v1h-3zM11 143h2v2h-2zM55 184h2v2h-2zM22 169h2v1h-2zM19 136h3v2h-3zM24 133h3v2h-3zM58 168h2v1h-2zM46 151h1v1h-1zM7 143h2v1h-2zM10 184h1v2h-1zM57 147h2v2h-2zM38 135h2v1h-2zM50 151h1v1h-1zM57 167h1v1h-1zM43 151h1v1h-1zM37 184h1v1h-1zM45 160h1v1h-1zM31 153h1v1h-1zM55 138h3v1h-3zM37 151h2v1h-2zM30 167h2v1h-2zM22 143h1v1h-1zM14 177h3v2h-3zM47 161h1v2h-1zM45 161h1v1h-1zM21 132h3v2h-3zM16 140h2v2h-2zM18 152h3v1h-3zM51 151h2v1h-2zM30 172h3v2h-3zM18 179h2v1h-2zM38 146h2v1h-2zM17 174h3v2h-3zM23 182h1v1h-1zM35 135h1v1h-1zM23 178h2v2h-2zM10 185h2v1h-2zM49 161h1v2h-1zM18 165h1v2h-1zM60 179h3v2h-3zM47 143h3v2h-3zM8 133h2v2h-2zM33 145h2v1h-2zM44 131h3v2h-3zM53 167h2v1h-2zM28 181h2v2h-2zM31 180h3v1h-3zM45 177h2v2h-2zM59 144h2v2h-2zM60 133h1v2h-1zM28 158h2v2h-2zM19 137h2v1h-2zM23 140h3v1h-3zM19 136h1v2h-1zM46 135h1v2h-1zM53 168h3v2h-3zM47 158h1v2h-1zM25 156h2v2h-2zM22 182h3v1h-3zM15 144h3v2h-3zM57 184h1v1h-1zM24 155h1v2h-1zM29 157h2v1h-2zM24 175h2v1h-2zM39 152h1v2h-1zM59 135h3v2h-3zM14 166h3v2h-3zM18 132h3v2h-3zM39 143h1v2h-1zM38 184h1v2h-1zM28 141h1v2h-1zM42 131h2v1h-2zM37 137h2v2h-2zM46 154h3v1h-3zM42 173h2v1h-2zM47 146h1v1h-1zM51 174h1v2h-1zM34 162h3v2h-3zM52 146h1v2h-1zM40 133h1v1h-1zM54 181h2v1h-2zM7 180h2v1h-2zM61 176h2v1h-2zM15 171h2v2h-2zM52 184h1v1h-1zM52 160h2v1h-2zM11 165h3v1h-3zM57 185h3v2h-3zM19 171h3v2h-3zM38 160h1v1h-1zM53 148h3v1h-3zM57 140h1v1h-1zM12 174h2v2h-2zM36 145h1v2h-1zM34 183h2v1h-2zM32 185h2v2h-2zM27 146h2v1h-2zM58 181h1v1h-1zM49 185h2v2h-2zM45 168h1v2h-1zM47 166h2v1h-2zM36 136h3v2h-3zM22 152h2v2h-2zM20 142h2v2h-2zM43 185h1v1h-1zM38 164h3v1h-3zM27 171h3v2h-3zM41 184h2v1h-2zM41 147h3v2h-3zM23 154h3v2h-3zM19 173h1v2h-1zM15 180h3v2h-3zM43 183h2v1h-2zM7 152h2v1h-2zM15 152h2v1h-2zM28 156h1v1h-1zM43 150h2v1h-2zM40 144h3v2h-3zM50 138h1v2h-1zM34 173h1v1h-1zM24 183h3v2h-3zM16 181h2v1h-2zM51 184h1v2h-1zM55 152h1v2h-1zM32 133h1v2h-1zM26 159h1v1h-1zM18 168h1v1h-1zM8 133h2v2h-2zM35 165h3v2h-3zM39 168h2v2h-2zM33 133h2v1h-2zM17 143h2v2h-2zM54 132h1v1h-1zM43 183h1v1h-1zM23 139h3v2h-3zM61 155h3v2h-3zM10 159h1v1h-1zM25 139h2v1h-2zM43 143h3v2h-3zM52 141h1v2h-1zM57 162h3v1h-3zM21 145h3v1h-3zM53 180h3v2h-3zM41 163h1v2h-1z"/><path fill="#ff9a00" d="M42 139L54 151L42 163L30 151z"/><path fill="#b23a2c" d="M42 143L50 151L42 159L34 151z"/><path fill="#00e4ff" d="M14 39h4v7h-4zM13 51h4v8h-4zM126 30h6v6h-6zM146 29h2v16h-2zM149 29h2v16h-2zM128 76h2v16h-2zM13 104h4v3h-4zM21 104h4v4h-4zM19 118h4v3h-4zM171 40h2v7h-2zM264 29h2v16h-2zM268 29h2v16h-2zM273 29h2v16h-2zM277 29h2v16h-2zM282 31h2v18h-2zM288 31h2v18h-2zM181 108h1v32h-1zM144 167h1v23h-1zM130 184h6v6h-6zM84 230h7v5h-7zM68 155h3v3h-3zM43 200h5v4h-5zM155 150h2v5h-2zM173 169h4v6h-4zM124 186h2v5h-2zM84 105h4v3h-4zM211 213h2v5h-2zM75 142h2v5h-2zM264 98h5v2h-5zM166 92h5v2h-5zM216 238h3v4h-3zM304 116h2v5h-2zM234 144h2v5h-2zM163 196h2v5h-2zM178 109h3v4h-3zM67 192h3v3h-3zM116 191h2v5h-2zM92 145h5v2h-5zM266 68h5v2h-5zM225 129h2v5h-2zM182 168h2v2h-2zM256 216h3v2h-3zM269 103h1v3h-1zM62 205h2v2h-2zM307 163h2v2h-2zM279 168h1v3h-1zM184 177h2v2h-2zM6 142h1v3h-1zM307 97h2v2h-2zM26 215h3v1h-3zM18 207h1v3h-1zM262 159h1v3h-1zM210 201h1v3h-1zM220 129h3v1h-3zM164 148h2v2h-2zM74 112h3v1h-3zM191 148h3v2h-3zM168 139h2v2h-2zM160 157h2v4h-2zM31 215h3v1h-3zM172 184h1v3h-1zM216 104h3v1h-3zM67 187h3v1h-3zM112 145h2v3h-2zM155 208h2v3h-2zM300 97h2v2h-2zM66 135h1v3h-1zM135 102h1v3h-1zM120 160h3v1h-3zM298 161h1v3h-1zM280 99h2v4h-2zM6 168h1v3h-1zM199 144h2v2h-2zM270 137h1v3h-1zM112 183h1v3h-1zM68 99h1v3h-1zM100 196h1v3h-1zM207 102h2v3h-2zM167 142h3v1h-3zM185 173h1v3h-1zM113 153h1v3h-1zM6 129h1v3h-1zM172 171h1v3h-1zM141 234h2v3h-2zM85 111h1v3h-1zM41 158h1v1h-1zM48 142h2v2h-2zM58 160h1v3h-1zM24 170h2v2h-2zM26 172h1v1h-1zM53 136h1v1h-1zM19 162h2v1h-2zM17 179h1v1h-1zM59 152h1v2h-1zM36 132h2v1h-2zM14 172h1v3h-1zM47 153h2v1h-2zM33 173h1v3h-1zM57 167h1v2h-1zM24 146h2v3h-2zM11 179h1v1h-1zM45 174h1v3h-1zM15 171h2v1h-2zM32 158h2v1h-2zM18 183h2v3h-2zM45 152h1v3h-1zM24 148h2v3h-2zM34 168h1v1h-1zM41 180h2v2h-2zM28 177h1v1h-1zM16 165h2v2h-2zM25 144h1v1h-1zM34 143h1v3h-1zM18 152h1v1h-1zM8 136h1v2h-1zM23 157h2v1h-2zM7 158h2v1h-2zM46 165h1v1h-1zM26 154h1v2h-1zM29 170h2v2h-2zM14 166h1v2h-1zM17 173h2v1h-2zM46 143h2v2h-2zM27 159h2v3h-2zM46 157h2v3h-2zM23 163h2v2h-2zM39 169h1v3h-1zM57 148h1v2h-1zM19 162h1v2h-1zM30 168h2v2h-2zM47 160h2v3h-2zM51 148h2v3h-2zM52 149h2v3h-2zM61 143h2v3h-2zM38 154h1v1h-1zM15 148h2v3h-2zM55 182h2v1h-2zM58 168h2v1h-2zM14 140h1v2h-1zM57 171h1v2h-1zM27 177h1v2h-1zM32 144h1v2h-1zM45 171h1v3h-1zM44 132h2v2h-2zM28 185h1v3h-1z"/><path fill="#ff3310" d="M110 197h10v11h-10zM113 57h3v7h-3zM76 126h3v7h-3zM152 144h5v4h-5zM120 172h5v2h-5zM303 96h3v3h-3zM215 164h4v4h-4zM241 216h5v2h-5zM220 103h5v2h-5zM238 139h2v3h-2zM193 198h3v1h-3zM151 148h3v1h-3zM164 222h1v3h-1zM182 166h3v1h-3zM276 215h2v3h-2zM44 106h7v16h-7zM47 103h5v5h-5z"/><path fill="#00ff00" stroke="#ff9a00" d="M6.0 104L9 108.0L6.0 112L3 108.0zM282.0 89L286 93.5L282.0 98L278 93.5z" shape-rendering="auto"/><path fill="none" stroke="#00ff00" stroke-width=".8" d="M181.0 64.5l4 4m0 -4l-4 4M48.5 236.0l4 4m0 -4l-4 4M251.0 237.0l4 4m0 -4l-4 4M85 44l4 4m0 -4l-4 4M292 123l4 4m0 -4l-4 4" shape-rendering="auto"/></g><path fill="#ffff00" fill-rule="evenodd" d="M212 24h308v258h-308zM213 25h306v256h-306z"/><use href="#bd" x="530" y="24" color="#2ec200"/><use href="#bd" x="212" y="275" color="#2ec200"/><use href="#bd" x="530" y="275" color="#2ec200"/><use href="#bd" x="212" y="525" color="#2ec200"/><use href="#bd" x="530" y="525" color="#2ec200"/></svg></div>
<div id="panel" class="a">
<div class="a" style="left:2px;top:0;width:384px;height:7px;background:#b5cbdd"></div>
<div class="a" style="left:2px;top:0;width:13px;height:1px;background:#fff"></div>
<div class="a" style="left:15px;top:0;width:72px;height:6px;background:#bdd2e4"></div>
<div class="a" style="left:88px;top:0;width:298px;height:1px;background:#f4f7fa"></div>
<div class="a" style="left:88px;top:1px;width:298px;height:1px;background:#0a0a0a"></div>
<div class="a" style="left:87px;top:0;width:1px;height:4px;background:#8fa3b5"></div>
<div class="a" style="left:130px;top:0;width:1px;height:4px;background:#8fa3b5"></div>
<div class="a" style="left:178px;top:0;width:1px;height:4px;background:#8fa3b5"></div>
<div class="a" style="left:250px;top:0;width:1px;height:4px;background:#8fa3b5"></div>
<div class="a" style="left:2px;top:6px;width:384px;height:1px;background:#55636f"></div>
<div class="a" style="left:0;top:0;width:2px;height:843px;background:#e6e6ec"></div>
<div class="a" style="left:2px;top:7px;width:3px;height:836px;background:#dedee2"></div>
<div class="a" style="left:5px;top:12px;width:363px;height:27px;background:#fff;border-top:1px solid #8e8f8f;border-bottom:2px solid #c6c6c6;box-sizing:border-box"></div>
<div class="a" style="left:367px;top:11px;width:16px;height:29px;box-sizing:border-box;border:1px solid #5d6b7c;border-radius:0 5px 5px 0;background:linear-gradient(#e6ecf3,#b9c8d8 50%,#a3b6ca 52%,#cbd7e3)"><svg class="a" style="left:4px;top:10px" width="8" height="8"><path d="M0 0h7l-3.500 7z" fill="#111"/></svg></div>
<div class="a" style="left:5px;top:47px;width:381px;height:490px;background:#fff;border-top:1px solid #9a9a9a;border-left:1px solid #a8a8a8;border-bottom:1px solid #b0b0b0;box-sizing:border-box"></div>
<div class="a" style="left:385px;top:47px;width:1px;height:343px;background:#b4ecf4"></div>
<svg class="a" style="left:10px;top:55px" width="8" height="9"><path d="M0 0h7l-3.5 8z" fill="#5a5a5a"/></svg>
<div class="cb" style="left:23px;top:50.0px"><svg width="11" height="15"><path d="M1.800 7.400l1.600-.8 1.400 3.400L8.200 1l1.300.5-4.200 11.700H4z" fill="#000"/></svg></div>
<svg class="a" style="left:39px;top:51px" width="14" height="18"><rect x=".5" y=".5" width="11" height="15" rx="1.500" fill="#7ddc5a" stroke="#3c8a2a"/><rect x="11" y="3" width="2" height="10" fill="#3c8a2a"/><rect x="3" y="15.500" width="7" height="1.500" fill="#3c8a2a"/><path d="M3 3v4M5.500 3v4M8 3v4M3 9v4M5.500 9v4M8 9v4" stroke="#2f7a20" stroke-width="1.200" stroke-dasharray="1.300 1"/></svg>
<div class="t" style="left:56px;top:52px;transform:none">fff</div>
<svg class="a" style="left:25px;top:78.3px" width="7" height="9"><path d="M0 0l6 4-6 4z" fill="#5a5a5a"/></svg>
<div class="cb" style="left:38px;top:73.3px"><svg width="11" height="15"><path d="M1.800 7.400l1.600-.8 1.400 3.400L8.200 1l1.300.5-4.200 11.700H4z" fill="#000"/></svg></div>
<svg class="a" style="left:53px;top:76.3px" width="14" height="15"><path d="M0 .5h3M0 3h3M0 5.500h3M0 8h3M0 10.500h3M0 13h3M10 .5h2.500M10 3h2.500M10 5.500h2.500M10 8h2.500M10 10.500h2.500M10 13h2.500" stroke="#444" stroke-width="1.3"/></svg>
<div class="t" style="left:71px;top:74.8px">0_1</div>
<svg class="a" style="left:25px;top:101.6px" width="7" height="9"><path d="M0 0l6 4-6 4z" fill="#5a5a5a"/></svg>
<div class="cb" style="left:38px;top:96.6px"><svg width="11" height="15"><path d="M1.800 7.400l1.600-.8 1.400 3.400L8.200 1l1.300.5-4.200 11.700H4z" fill="#000"/></svg></div>
<svg class="a" style="left:53px;top:99.6px" width="14" height="15"><path d="M0 .5h3M0 3h3M0 5.500h3M0 8h3M0 10.500h3M0 13h3M10 .5h2.500M10 3h2.500M10 5.500h2.500M10 8h2.500M10 10.500h2.500M10 13h2.500" stroke="#444" stroke-width="1.3"/></svg>
<div class="t" style="left:71px;top:98.1px">0_2</div>
<svg class="a" style="left:25px;top:124.8px" width="7" height="9"><path d="M0 0l6 4-6 4z" fill="#5a5a5a"/></svg>
<div class="cb" style="left:38px;top:119.8px"><svg width="11" height="15"><path d="M1.800 7.400l1.600-.8 1.400 3.400L8.200 1l1.300.5-4.200 11.700H4z" fill="#000"/></svg></div>
<svg class="a" style="left:53px;top:122.8px" width="14" height="15"><path d="M0 .5h3M0 3h3M0 5.500h3M0 8h3M0 10.500h3M0 13h3M10 .5h2.500M10 3h2.500M10 5.500h2.500M10 8h2.500M10 10.500h2.500M10 13h2.500" stroke="#444" stroke-width="1.3"/></svg>
<div class="t" style="left:71px;top:121.3px">0_3</div>
<svg class="a" style="left:25px;top:148.1px" width="7" height="9"><path d="M0 0l6 4-6 4z" fill="#5a5a5a"/></svg>
<div class="cb" style="left:38px;top:143.1px"><svg width="11" height="15"><path d="M1.800 7.400l1.600-.8 1.400 3.400L8.200 1l1.300.5-4.200 11.700H4z" fill="#000"/></svg></div>
<svg class="a" style="left:53px;top:146.1px" width="14" height="15"><path d="M0 .5h3M0 3h3M0 5.500h3M0 8h3M0 10.500h3M0 13h3M10 .5h2.500M10 3h2.500M10 5.500h2.500M10 8h2.500M10 10.500h2.500M10 13h2.500" stroke="#444" stroke-width="1.3"/></svg>
<div class="t" style="left:71px;top:144.6px">0_4</div>
<svg class="a" style="left:25px;top:171.3px" width="7" height="9"><path d="M0 0l6 4-6 4z" fill="#5a5a5a"/></svg>
<div class="cb" style="left:38px;top:166.3px"><svg width="11" height="15"><path d="M1.800 7.400l1.600-.8 1.400 3.400L8.200 1l1.300.5-4.200 11.700H4z" fill="#000"/></svg></div>
<svg class="a" style="left:53px;top:169.3px" width="14" height="15"><path d="M0 .5h3M0 3h3M0 5.500h3M0 8h3M0 10.500h3M0 13h3M10 .5h2.500M10 3h2.500M10 5.500h2.500M10 8h2.500M10 10.500h2.500M10 13h2.500" stroke="#444" stroke-width="1.3"/></svg>
<div class="t" style="left:71px;top:167.8px">0_5</div>
<svg class="a" style="left:25px;top:194.6px" width="7" height="9"><path d="M0 0l6 4-6 4z" fill="#5a5a5a"/></svg>
<div class="cb" style="left:38px;top:189.6px"><svg width="11" height="15"><path d="M1.800 7.400l1.600-.8 1.400 3.400L8.200 1l1.300.5-4.200 11.700H4z" fill="#000"/></svg></div>
<svg class="a" style="left:53px;top:192.6px" width="14" height="15"><path d="M0 .5h3M0 3h3M0 5.500h3M0 8h3M0 10.500h3M0 13h3M10 .5h2.500M10 3h2.500M10 5.500h2.500M10 8h2.500M10 10.500h2.500M10 13h2.500" stroke="#444" stroke-width="1.3"/></svg>
<div class="t" style="left:71px;top:191.1px">0_6</div>
<svg class="a" style="left:25px;top:217.9px" width="7" height="9"><path d="M0 0l6 4-6 4z" fill="#5a5a5a"/></svg>
<div class="cb" style="left:38px;top:212.9px"><svg width="11" height="15"><path d="M1.800 7.400l1.600-.8 1.400 3.400L8.200 1l1.300.5-4.200 11.700H4z" fill="#000"/></svg></div>
<svg class="a" style="left:53px;top:215.9px" width="14" height="15"><path d="M0 .5h3M0 3h3M0 5.500h3M0 8h3M0 10.500h3M0 13h3M10 .5h2.500M10 3h2.500M10 5.500h2.500M10 8h2.500M10 10.500h2.500M10 13h2.500" stroke="#444" stroke-width="1.3"/></svg>
<div class="t" style="left:71px;top:214.4px">0_7</div>
<svg class="a" style="left:25px;top:241.1px" width="7" height="9"><path d="M0 0l6 4-6 4z" fill="#5a5a5a"/></svg>
<div class="cb" style="left:38px;top:236.1px"><svg width="11" height="15"><path d="M1.800 7.400l1.600-.8 1.400 3.400L8.200 1l1.300.5-4.200 11.700H4z" fill="#000"/></svg></div>
<svg class="a" style="left:53px;top:239.1px" width="14" height="15"><path d="M0 .5h3M0 3h3M0 5.500h3M0 8h3M0 10.500h3M0 13h3M10 .5h2.500M10 3h2.500M10 5.500h2.500M10 8h2.500M10 10.500h2.500M10 13h2.500" stroke="#444" stroke-width="1.3"/></svg>
<div class="t" style="left:71px;top:237.6px">0_8</div>
<svg class="a" style="left:25px;top:264.4px" width="7" height="9"><path d="M0 0l6 4-6 4z" fill="#5a5a5a"/></svg>
<div class="cb" style="left:38px;top:259.4px"><svg width="11" height="15"><path d="M1.800 7.400l1.600-.8 1.400 3.400L8.200 1l1.300.5-4.200 11.700H4z" fill="#000"/></svg></div>
<svg class="a" style="left:53px;top:262.4px" width="14" height="15"><path d="M0 .5h3M0 3h3M0 5.500h3M0 8h3M0 10.500h3M0 13h3M10 .5h2.500M10 3h2.500M10 5.500h2.500M10 8h2.500M10 10.500h2.500M10 13h2.500" stroke="#444" stroke-width="1.3"/></svg>
<div class="t" style="left:71px;top:260.9px">0_9</div>
<svg class="a" style="left:25px;top:287.6px" width="7" height="9"><path d="M0 0l6 4-6 4z" fill="#5a5a5a"/></svg>
<div class="cb" style="left:38px;top:282.6px"><svg width="11" height="15"><path d="M1.800 7.400l1.600-.8 1.400 3.400L8.200 1l1.300.5-4.200 11.700H4z" fill="#000"/></svg></div>
<svg class="a" style="left:53px;top:285.6px" width="14" height="15"><path d="M0 .5h3M0 3h3M0 5.500h3M0 8h3M0 10.500h3M0 13h3M10 .5h2.500M10 3h2.500M10 5.500h2.500M10 8h2.500M10 10.500h2.500M10 13h2.500" stroke="#444" stroke-width="1.3"/></svg>
<div class="t" style="left:71px;top:284.1px">0_10</div>
<svg class="a" style="left:25px;top:310.9px" width="7" height="9"><path d="M0 0l6 4-6 4z" fill="#5a5a5a"/></svg>
<div class="cb" style="left:38px;top:305.9px"><svg width="11" height="15"><path d="M1.800 7.400l1.600-.8 1.400 3.400L8.200 1l1.300.5-4.200 11.700H4z" fill="#000"/></svg></div>
<svg class="a" style="left:53px;top:308.9px" width="14" height="15"><path d="M0 .5h3M0 3h3M0 5.500h3M0 8h3M0 10.500h3M0 13h3M10 .5h2.500M10 3h2.500M10 5.500h2.500M10 8h2.500M10 10.500h2.500M10 13h2.500" stroke="#444" stroke-width="1.3"/></svg>
<div class="t" style="left:71px;top:307.4px">0_11</div>
<svg class="a" style="left:25px;top:334.2px" width="7" height="9"><path d="M0 0l6 4-6 4z" fill="#5a5a5a"/></svg>
<div class="cb" style="left:38px;top:329.2px"><svg width="11" height="15"><path d="M1.800 7.400l1.600-.8 1.400 3.400L8.200 1l1.300.5-4.200 11.700H4z" fill="#000"/></svg></div>
<svg class="a" style="left:53px;top:332.2px" width="14" height="15"><path d="M0 .5h3M0 3h3M0 5.500h3M0 8h3M0 10.500h3M0 13h3M10 .5h2.500M10 3h2.500M10 5.500h2.500M10 8h2.500M10 10.500h2.500M10 13h2.500" stroke="#444" stroke-width="1.3"/></svg>
<div class="t" style="left:71px;top:330.7px">0_12</div>
<svg class="a" style="left:25px;top:357.4px" width="7" height="9"><path d="M0 0l6 4-6 4z" fill="#5a5a5a"/></svg>
<div class="cb" style="left:38px;top:352.4px"><svg width="11" height="15"><path d="M1.800 7.400l1.600-.8 1.400 3.400L8.200 1l1.300.5-4.200 11.700H4z" fill="#000"/></svg></div>
<svg class="a" style="left:53px;top:355.4px" width="14" height="15"><path d="M0 .5h3M0 3h3M0 5.500h3M0 8h3M0 10.500h3M0 13h3M10 .5h2.500M10 3h2.500M10 5.500h2.500M10 8h2.500M10 10.500h2.500M10 13h2.500" stroke="#444" stroke-width="1.3"/></svg>
<div class="t" style="left:71px;top:353.9px">0_13</div>
<svg class="a" style="left:25px;top:380.7px" width="7" height="9"><path d="M0 0l6 4-6 4z" fill="#5a5a5a"/></svg>
<div class="cb" style="left:38px;top:375.7px"><svg width="11" height="15"><path d="M1.800 7.400l1.600-.8 1.400 3.400L8.200 1l1.300.5-4.200 11.700H4z" fill="#000"/></svg></div>
<svg class="a" style="left:53px;top:378.7px" width="14" height="15"><path d="M0 .5h3M0 3h3M0 5.500h3M0 8h3M0 10.500h3M0 13h3M10 .5h2.500M10 3h2.500M10 5.500h2.500M10 8h2.500M10 10.500h2.500M10 13h2.500" stroke="#444" stroke-width="1.3"/></svg>
<div class="t" style="left:71px;top:377.2px">0_14</div>
<svg class="a" style="left:25px;top:403.9px" width="7" height="9"><path d="M0 0l6 4-6 4z" fill="#5a5a5a"/></svg>
<div class="cb" style="left:38px;top:398.9px"><svg width="11" height="15"><path d="M1.800 7.400l1.600-.8 1.400 3.400L8.200 1l1.300.5-4.200 11.700H4z" fill="#000"/></svg></div>
<svg class="a" style="left:53px;top:401.9px" width="14" height="15"><path d="M0 .5h3M0 3h3M0 5.500h3M0 8h3M0 10.500h3M0 13h3M10 .5h2.500M10 3h2.500M10 5.500h2.500M10 8h2.500M10 10.500h2.500M10 13h2.500" stroke="#444" stroke-width="1.3"/></svg>
<div class="t" style="left:71px;top:400.4px">0_15</div>
<svg class="a" style="left:25px;top:427.2px" width="7" height="9"><path d="M0 0l6 4-6 4z" fill="#5a5a5a"/></svg>
<div class="cb" style="left:38px;top:422.2px"><svg width="11" height="15"><path d="M1.800 7.400l1.600-.8 1.400 3.400L8.200 1l1.300.5-4.200 11.700H4z" fill="#000"/></svg></div>
<svg class="a" style="left:53px;top:425.2px" width="14" height="15"><path d="M0 .5h3M0 3h3M0 5.500h3M0 8h3M0 10.500h3M0 13h3M10 .5h2.500M10 3h2.500M10 5.500h2.500M10 8h2.500M10 10.500h2.500M10 13h2.500" stroke="#444" stroke-width="1.3"/></svg>
<div class="t" style="left:71px;top:423.7px">0_16</div>
<svg class="a" style="left:25px;top:450.5px" width="7" height="9"><path d="M0 0l6 4-6 4z" fill="#5a5a5a"/></svg>
<div class="cb" style="left:38px;top:445.5px"><svg width="11" height="15"><path d="M1.800 7.400l1.600-.8 1.400 3.400L8.200 1l1.300.5-4.200 11.700H4z" fill="#000"/></svg></div>
<svg class="a" style="left:53px;top:448.5px" width="14" height="15"><path d="M0 .5h3M0 3h3M0 5.500h3M0 8h3M0 10.500h3M0 13h3M10 .5h2.500M10 3h2.500M10 5.500h2.500M10 8h2.500M10 10.500h2.500M10 13h2.500" stroke="#444" stroke-width="1.3"/></svg>
<div class="t" style="left:71px;top:447.0px">0_17</div>
<svg class="a" style="left:25px;top:473.7px" width="7" height="9"><path d="M0 0l6 4-6 4z" fill="#5a5a5a"/></svg>
<div class="cb" style="left:38px;top:468.7px"><svg width="11" height="15"><path d="M1.800 7.400l1.600-.8 1.400 3.400L8.200 1l1.300.5-4.200 11.700H4z" fill="#000"/></svg></div>
<svg class="a" style="left:53px;top:471.7px" width="14" height="15"><path d="M0 .5h3M0 3h3M0 5.500h3M0 8h3M0 10.500h3M0 13h3M10 .5h2.500M10 3h2.500M10 5.500h2.500M10 8h2.500M10 10.500h2.500M10 13h2.500" stroke="#444" stroke-width="1.3"/></svg>
<div class="t" style="left:71px;top:470.2px">0_18</div>
<svg class="a" style="left:25px;top:497.0px" width="7" height="9"><path d="M0 0l6 4-6 4z" fill="#5a5a5a"/></svg>
<div class="cb" style="left:38px;top:492.0px"><svg width="11" height="15"><path d="M1.800 7.400l1.600-.8 1.400 3.400L8.200 1l1.300.5-4.200 11.700H4z" fill="#000"/></svg></div>
<svg class="a" style="left:53px;top:495.0px" width="14" height="15"><path d="M0 .5h3M0 3h3M0 5.500h3M0 8h3M0 10.500h3M0 13h3M10 .5h2.500M10 3h2.500M10 5.500h2.500M10 8h2.500M10 10.500h2.500M10 13h2.500" stroke="#444" stroke-width="1.3"/></svg>
<div class="t" style="left:71px;top:493.5px">0_19</div>
<svg class="a" style="left:25px;top:520.2px" width="7" height="9"><path d="M0 0l6 4-6 4z" fill="#5a5a5a"/></svg>
<div class="cb" style="left:38px;top:515.2px"><svg width="11" height="15"><path d="M1.800 7.400l1.600-.8 1.400 3.400L8.200 1l1.300.5-4.200 11.700H4z" fill="#000"/></svg></div>
<svg class="a" style="left:53px;top:518.2px" width="14" height="15"><path d="M0 .5h3M0 3h3M0 5.500h3M0 8h3M0 10.500h3M0 13h3M10 .5h2.500M10 3h2.500M10 5.500h2.500M10 8h2.500M10 10.500h2.500M10 13h2.500" stroke="#444" stroke-width="1.3"/></svg>
<div class="t" style="left:71px;top:516.7px">0_20</div>
<div class="t" style="left:102.500px;top:542px;font-size:14px;color:#f01020;-webkit-text-stroke:.3px #f01020;transform:scaleX(.803)">Footprint : Dummy 7 (2.9%) Total 238 (97.1%)</div>
<div class="btn" style="left:6px;width:83px;color:#e8202a"><span>All</span></div>
<div class="btn" style="left:92px;width:91px;color:#000"><span>Part</span></div>
<div class="btn" style="left:187px;width:131px;color:#000"><span>Component</span></div>
<div class="btn" style="left:321px;width:112px;color:#000"><span>Update</span></div>
<svg class="a" style="left:44px;top:601px" width="8" height="5"><path d="M0 0h7l-3.500 4z" fill="#222"/></svg>
<div class="a" style="left:3px;top:610px;width:383px;height:195px;background:#000"></div>
<svg class="a" style="left:3px;top:610px" width="383" height="195" shape-rendering="crispEdges"><path fill="#fff" fill-rule="evenodd" d="M102 59h163v135h-163zM103 60h161v133h-161z"/><path fill="#0000ff" fill-rule="evenodd" d="M131 65h104v123h-104zM132 66h102v121h-102z"/><g transform="translate(131.3,65.3) scale(0.1546) translate(-189,-11)" style="--bs:currentColor;--bw:3"><use href="#bd" x="212" y="24" color="#22ff00"/><use href="#bd" x="530" y="24" color="#2db400"/><use href="#bd" x="212" y="275" color="#2db400"/><use href="#bd" x="530" y="275" color="#2db400"/><use href="#bd" x="212" y="525" color="#2db400"/><use href="#bd" x="530" y="525" color="#2db400"/></g></svg>
<div class="zb" style="left:147.4px;border:1px solid #55585e;background:linear-gradient(#fbfbfd,#e9eaf0 60%,#d9dbe3);box-shadow:0 1px 1px #888"><svg class="a" style="left:-1px;top:-1px" width="16" height="20"><path d="M5 9h5M7.500 6.500v5" stroke="#000" stroke-width="1.800"/></svg></div>
<div class="zb" style="left:172.2px;border:1px solid #55585e;background:linear-gradient(#fbfbfd,#e9eaf0 60%,#d9dbe3);box-shadow:0 1px 1px #888"><svg class="a" style="left:-1px;top:-1px" width="16" height="20"><path d="M4 9.500h7" stroke="#000" stroke-width="2.200"/></svg></div>
<div class="zb" style="left:197.0px;border:1px solid #d0d2da;background:linear-gradient(#ecedf3,#e3e5ee 60%,#dcdee8);box-shadow:0 0 2px #e8e8f0"><svg class="a" style="left:-1px;top:-1px" width="16" height="20"><path d="M10 5.500v7l-5-3.500z" fill="#8a8d94"/></svg></div>
<div class="zb" style="left:221.8px;border:1px solid #d0d2da;background:linear-gradient(#ecedf3,#e3e5ee 60%,#dcdee8);box-shadow:0 0 2px #e8e8f0"><svg class="a" style="left:-1px;top:-1px" width="16" height="20"><path d="M5 5.500v7l5-3.500z" fill="#8a8d94"/></svg></div>
<div class="zb" style="left:246.6px;border:1px solid #d0d2da;background:linear-gradient(#ecedf3,#e3e5ee 60%,#dcdee8);box-shadow:0 0 2px #e8e8f0"><svg class="a" style="left:-1px;top:-1px" width="16" height="20"><path d="M4.500 12h6l-3-7z" fill="#8a8d94"/></svg></div>
<div class="zb" style="left:271.4px;border:1px solid #d0d2da;background:linear-gradient(#ecedf3,#e3e5ee 60%,#dcdee8);box-shadow:0 0 2px #e8e8f0"><svg class="a" style="left:-1px;top:-1px" width="16" height="20"><path d="M4.500 6h6l-3 7z" fill="#8a8d94"/></svg></div>
<div class="a" style="left:2px;top:839px;width:384px;height:2px;background:#ececec"></div>
</div>
<div class="a" style="left:6px;top:993px;width:1435px;height:4px;background:#dadada"></div><div class="a" style="left:0;top:997px;width:1441px;height:19px;background:#f8f8fa"></div><svg class="a" style="left:0;top:993px" width="40" height="30"><path d="M1 0h5v4h26L1 27z" fill="#b9d7ef"/></svg><div class="a" style="left:5px;top:1016px;width:1435px;height:58px;background:#0064cb"></div><div class="a" style="left:0;top:1016px;width:1px;height:65px;background:#e6e6e6"></div><div class="a" style="left:322px;top:1024px;width:56px;height:46px;background:#dddddd;box-sizing:border-box;border:1px solid #f3ebe2"><svg class="a" style="left:-1px;top:-1px" width="56" height="46"><path d="M10.500 5h5M11 8.200h4M11 11.400h4M11 14.600h4M11 17.800h4M39 5h5.500M40 8.200h4M40 11.400h4M40 14.600h4M40 17.800h4M40 21h4M40 24.200h4" stroke="#000" stroke-width="1.500"/><rect x="15.500" y="4.500" width="9" height="14" fill="#fff" stroke="#000"/><path d="M31 4.500h8.500v17h-6z" fill="#2fb04a" stroke="#000"/><path d="M19 13h9v-4l9 6-9 6v-3h-9z" fill="#fbe89a" stroke="#000"/><path d="M53 6v28" stroke="#888" stroke-width="1"/><text x="9" y="38" font-family="Liberation Sans,sans-serif" font-weight="bold" font-size="27" fill="#ffff00" stroke="#000" stroke-width="2.600" paint-order="stroke" textLength="24" lengthAdjust="spacingAndGlyphs">M</text><text x="31" y="38" font-family="Liberation Sans,sans-serif" font-weight="bold" font-size="21" fill="#ff6a20" stroke="#000" stroke-width="2.600" paint-order="stroke" textLength="15" lengthAdjust="spacingAndGlyphs">A</text></svg></div>
</body></html>
